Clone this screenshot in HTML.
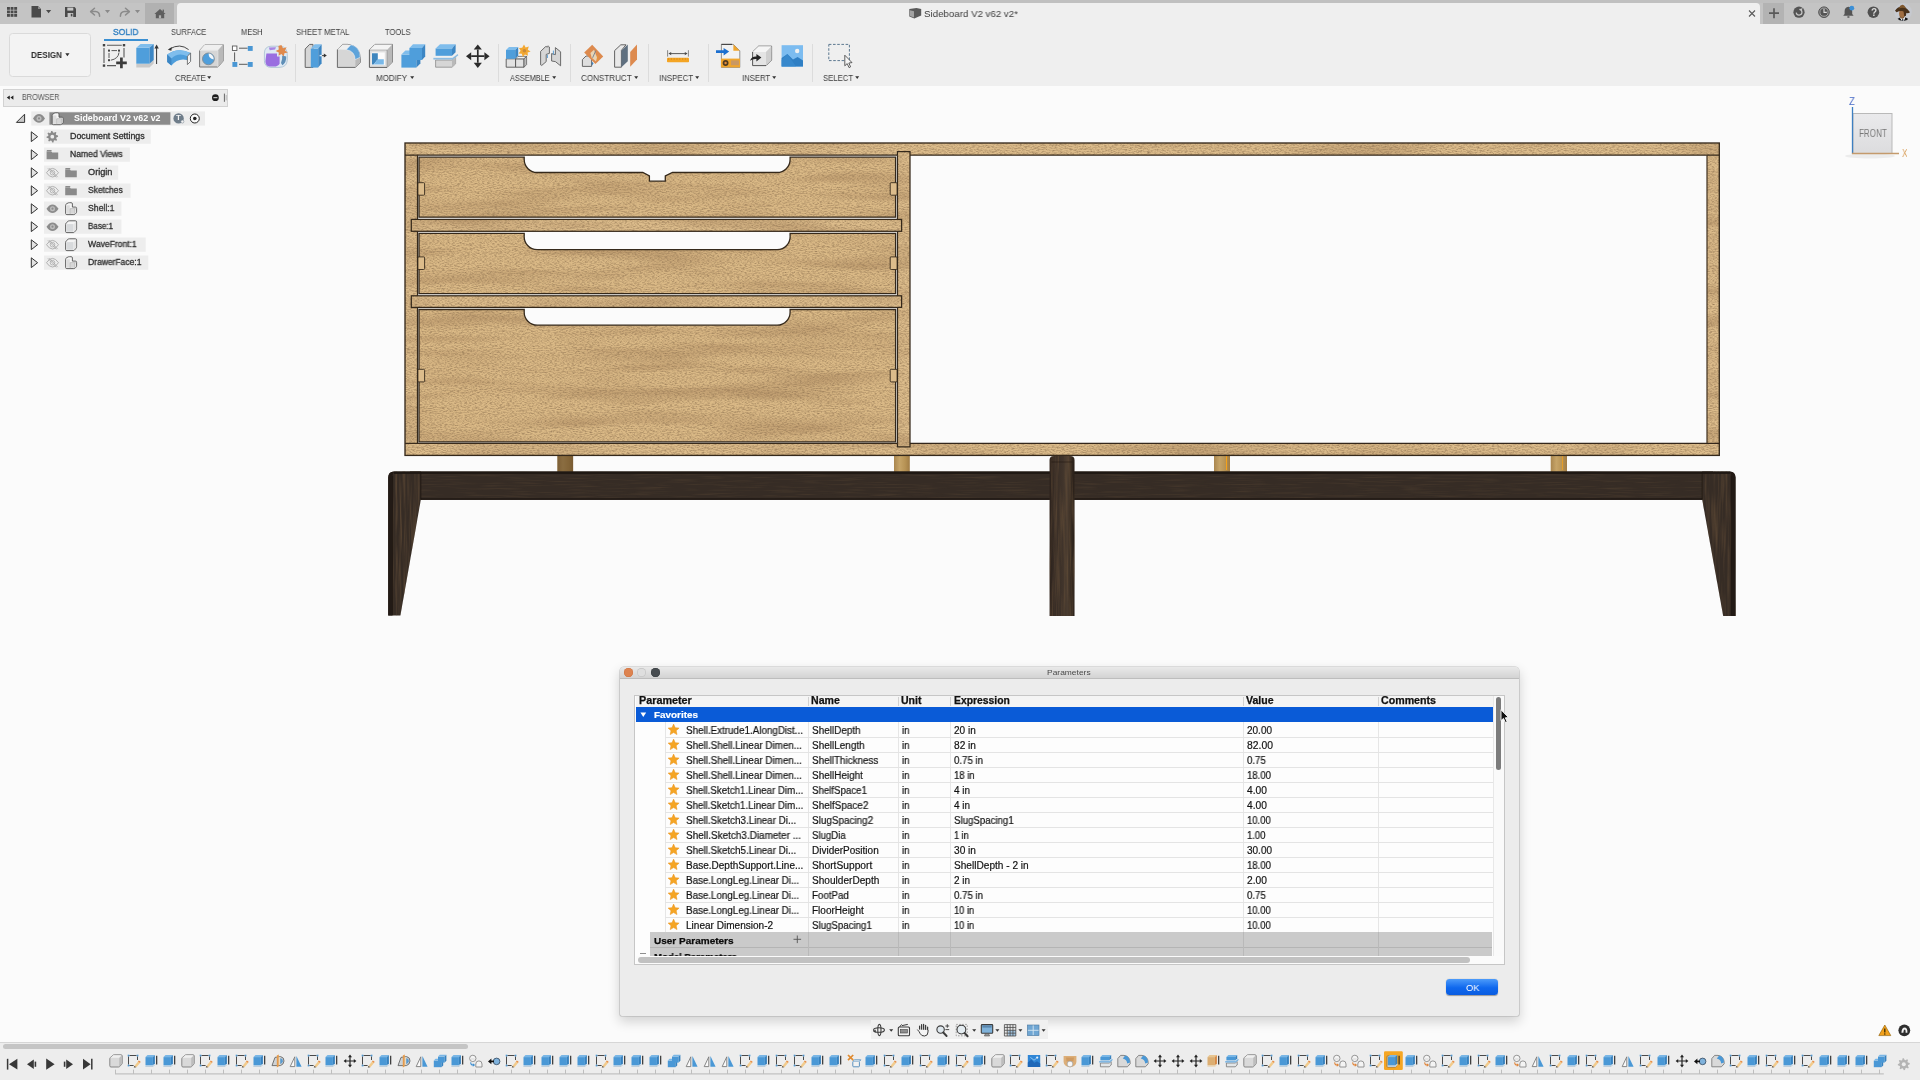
<!DOCTYPE html>
<html><head><meta charset="utf-8"><title>Sideboard V2 v62 v2</title>
<style>
html,body{margin:0;padding:0;}
body{width:1920px;height:1080px;overflow:hidden;background:#fbfbfb;position:relative;font-family:"Liberation Sans",sans-serif;}
.t{position:absolute;white-space:nowrap;font-family:"Liberation Sans",sans-serif;will-change:transform;}
.a{position:absolute;}
svg{position:absolute;overflow:visible;}
</style></head><body>

<div class="a" style="left:0;top:0;width:1920px;height:24px;background:#c4c4c4"></div>
<div class="a" style="left:0;top:0;width:1920px;height:3px;background:#c0c0c0"></div>
<div class="a" style="left:0;top:24px;width:1920px;height:62px;background:#efefef"></div>
<div class="a" style="left:177px;top:3px;width:1583px;height:22px;background:#efefef;border-radius:4px 4px 0 0"></div>
<div class="a" style="left:145px;top:3px;width:29px;height:21px;background:#b1b1b1"></div>
<div class="a" style="left:1763px;top:3px;width:21px;height:21px;background:#b3b3b3"></div>
<div class="a" style="left:0;top:1042px;width:1920px;height:38px;background:#ededed;border-top:1px solid #d6d6d6;box-sizing:border-box"></div>
<div class="a" style="left:3px;top:1044px;width:465px;height:5px;background:#c5c5c5;border-radius:3px"></div>
<svg width="1920" height="1080" viewBox="0 0 1920 1080" style="left:0;top:0">
<defs>
<filter id="grain" x="0" y="0" width="100%" height="100%" color-interpolation-filters="sRGB">
 <feTurbulence type="fractalNoise" baseFrequency="0.4 0.95" numOctaves="3" seed="7" result="n1"/>
 <feColorMatrix in="n1" type="matrix" values="0 0 0 0 0.55  0 0 0 0 0.44  0 0 0 0 0.31  1.4 0 0 0 -0.54" result="g1"/>
 <feTurbulence type="fractalNoise" baseFrequency="0.007 0.07" numOctaves="2" seed="2" result="n2"/>
 <feColorMatrix in="n2" type="matrix" values="0 0 0 0 0.62  0 0 0 0 0.48  0 0 0 0 0.33  1.1 0 0 0 -0.47" result="g2"/>
 <feMerge result="m"><feMergeNode in="g2"/><feMergeNode in="g1"/></feMerge>
 <feComposite in="m" in2="SourceGraphic" operator="in" result="gg"/>
 <feMerge><feMergeNode in="SourceGraphic"/><feMergeNode in="gg"/></feMerge>
</filter>
<filter id="grainL" x="0" y="0" width="100%" height="100%" color-interpolation-filters="sRGB">
 <feTurbulence type="fractalNoise" baseFrequency="0.05 0.6" numOctaves="3" seed="3" result="n"/>
 <feColorMatrix in="n" type="matrix" values="0 0 0 0 0.98  0 0 0 0 0.88  0 0 0 0 0.68  1.6 0 0 0 -0.70" result="g"/>
 <feComposite in="g" in2="SourceGraphic" operator="in" result="gg"/>
 <feMerge><feMergeNode in="SourceGraphic"/><feMergeNode in="gg"/></feMerge>
</filter>
<filter id="grainD" x="0" y="0" width="100%" height="100%" color-interpolation-filters="sRGB">
 <feTurbulence type="fractalNoise" baseFrequency="0.03 0.7" numOctaves="2" seed="11" result="n"/>
 <feColorMatrix in="n" type="matrix" values="0 0 0 0 0.34  0 0 0 0 0.27  0 0 0 0 0.20  1.1 0 0 0 -0.52" result="g"/>
 <feComposite in="g" in2="SourceGraphic" operator="in" result="gg"/>
 <feMerge><feMergeNode in="SourceGraphic"/><feMergeNode in="gg"/></feMerge>
</filter>
<filter id="grainV" x="0" y="0" width="100%" height="100%" color-interpolation-filters="sRGB">
 <feTurbulence type="fractalNoise" baseFrequency="0.5 0.02" numOctaves="2" seed="5" result="n"/>
 <feColorMatrix in="n" type="matrix" values="0 0 0 0 0.40  0 0 0 0 0.31  0 0 0 0 0.22  1.5 0 0 0 -0.60" result="g"/>
 <feComposite in="g" in2="SourceGraphic" operator="in" result="gg"/>
 <feMerge><feMergeNode in="SourceGraphic"/><feMergeNode in="gg"/></feMerge>
</filter>
<linearGradient id="vcg" x1="0" x2="0" y1="0" y2="1"><stop offset="0" stop-color="#eaeaec"/><stop offset="1" stop-color="#dcdcde"/></linearGradient>
<linearGradient id="slug" x1="0" x2="1" y1="0" y2="0">
 <stop offset="0" stop-color="#a9864f"/><stop offset="0.35" stop-color="#c6a468"/><stop offset="0.7" stop-color="#b79355"/><stop offset="1" stop-color="#a07c45"/>
</linearGradient>
<linearGradient id="legc" x1="0" x2="1" y1="0" y2="0">
 <stop offset="0" stop-color="#2b211b"/><stop offset="0.18" stop-color="#372c25"/><stop offset="0.5" stop-color="#3f332a"/><stop offset="0.72" stop-color="#4a3c30"/><stop offset="0.9" stop-color="#33281f"/><stop offset="1" stop-color="#271e18"/>
</linearGradient>
</defs>
<rect x="557.4" y="455" width="15.7" height="17" fill="url(#slug)"/>
<rect x="894.0" y="455" width="15.8" height="17" fill="url(#slug)"/>
<rect x="1214.0" y="455" width="16.0" height="17" fill="url(#slug)"/>
<rect x="1550.7" y="455" width="16.3" height="17" fill="url(#slug)"/>
<rect x="557.4" y="455" width="15.7" height="17" fill="#5a4020" opacity="0.55"/>
<rect x="1226" y="456" width="1" height="14" fill="#f5a21a"/>
<rect x="1562" y="456" width="1" height="14" fill="#f5a21a" opacity="0.75"/>
<g filter="url(#grainD)">
<rect x="410" y="471.5" width="1303" height="28.2" fill="#362c25"/>
</g>
<g filter="url(#grainV)">
<path d="M388.2,477.5 Q388.4,471.7 394,471.5 L420.8,471.5 L420.8,499.7 L400.4,615.6 L388.2,615.6 Z" fill="#362c25"/>
<path d="M1735.5,477.5 Q1735.3,471.7 1729.7,471.5 L1702.2,471.5 L1702.2,499.7 L1723.2,616 L1735.5,616 Z" fill="#362c25"/>
</g>
<rect x="394" y="471.5" width="1336" height="2.4" fill="#1f1813"/>
<rect x="420.8" y="498.2" width="1281.4" height="1.7" fill="#211914"/>
<line x1="420.8" y1="472" x2="420.8" y2="499.7" stroke="#1c140f" stroke-width="0.8"/>
<line x1="1702.2" y1="472" x2="1702.2" y2="499.7" stroke="#1c140f" stroke-width="0.8"/>
<path d="M388.2,477.5 Q388.4,471.7 394,471.5 L392.4,475.6 L392.4,615.6 L388.2,615.6 Z" fill="#221a15"/>
<path d="M1735.5,477.5 Q1735.3,471.7 1729.7,471.5 L1731.4,475.6 L1731.4,616 L1735.5,616 Z" fill="#221a15"/>
<path d="M392.6,475.6 L392.6,615" stroke="#17110d" stroke-width="0.7" fill="none"/>
<path d="M1731.2,475.6 L1731.2,615.5" stroke="#17110d" stroke-width="0.7" fill="none"/>
<g filter="url(#grain)">
<rect x="405" y="143" width="1314.3" height="312.4" fill="#dcbc8b"/>
</g>
<rect x="910" y="155.2" width="797" height="288.1" fill="#fbfbfb"/>
<rect x="417.5" y="155.2" width="480" height="288.1" fill="#fbfbfb"/>
<g filter="url(#grain)">
<rect x="411.3" y="219.4" width="490.3" height="11.9" fill="#dcbc8b"/>
<rect x="411.3" y="295.8" width="490.3" height="11.6" fill="#dcbc8b"/>
<rect x="897.5" y="151.5" width="12.5" height="295.3" fill="#dcbc8b"/>
</g>
<path d="M419.0,157.2 L524.2,157.2 L524.2,159.5 A13.0,13.0 0 0 0 537.2,172.5 L642.8,172.5 L649.4,176.0 L649.4,181.2 L665.3,181.2 L665.3,176.0 L672.5,172.5 L777.1,172.5 A13.0,13.0 0 0 0 790.1,159.5 L790.1,157.2 L895.6,157.2 L895.6,217.2 L419.0,217.2 Z" fill="#dab986" filter="url(#grain)"/>
<path d="M419.0,157.2 L524.2,157.2 L524.2,159.5 A13.0,13.0 0 0 0 537.2,172.5 L642.8,172.5 L649.4,176.0 L649.4,181.2 L665.3,181.2 L665.3,176.0 L672.5,172.5 L777.1,172.5 A13.0,13.0 0 0 0 790.1,159.5 L790.1,157.2 L895.6,157.2 L895.6,217.2 L419.0,217.2 Z" fill="none" stroke="#35291b" stroke-width="1.3"/>
<path d="M419.0,233.3 L524.2,233.3 L524.2,235.60000000000002 A13.0,13.0 0 0 0 537.2,249.6 L777.1,249.6 A13.0,13.0 0 0 0 790.1,235.60000000000002 L790.1,233.3 L895.6,233.3 L895.6,293.7 L419.0,293.7 Z" fill="#dab986" filter="url(#grain)"/>
<path d="M419.0,233.3 L524.2,233.3 L524.2,235.60000000000002 A13.0,13.0 0 0 0 537.2,249.6 L777.1,249.6 A13.0,13.0 0 0 0 790.1,235.60000000000002 L790.1,233.3 L895.6,233.3 L895.6,293.7 L419.0,293.7 Z" fill="none" stroke="#35291b" stroke-width="1.3"/>
<path d="M419.0,309.5 L524.2,309.5 L524.2,311.8 A13.0,13.0 0 0 0 537.2,325.2 L777.1,325.2 A13.0,13.0 0 0 0 790.1,311.8 L790.1,309.5 L895.6,309.5 L895.6,441.8 L419.0,441.8 Z" fill="#dab986" filter="url(#grain)"/>
<path d="M419.0,309.5 L524.2,309.5 L524.2,311.8 A13.0,13.0 0 0 0 537.2,325.2 L777.1,325.2 A13.0,13.0 0 0 0 790.1,311.8 L790.1,309.5 L895.6,309.5 L895.6,441.8 L419.0,441.8 Z" fill="none" stroke="#35291b" stroke-width="1.3"/>
<rect x="417.8" y="182.7" width="6.8" height="12.5" rx="1" fill="#dcbc8b" stroke="#35291b" stroke-width="0.9"/>
<rect x="890.2" y="182.7" width="7.0" height="12.5" rx="1" fill="#dcbc8b" stroke="#35291b" stroke-width="0.9"/>
<rect x="417.8" y="256.9" width="6.8" height="12.6" rx="1" fill="#dcbc8b" stroke="#35291b" stroke-width="0.9"/>
<rect x="890.2" y="256.9" width="7.0" height="12.6" rx="1" fill="#dcbc8b" stroke="#35291b" stroke-width="0.9"/>
<rect x="417.8" y="369.3" width="6.8" height="12.6" rx="1" fill="#dcbc8b" stroke="#35291b" stroke-width="0.9"/>
<rect x="890.2" y="369.3" width="7.0" height="12.6" rx="1" fill="#dcbc8b" stroke="#35291b" stroke-width="0.9"/>
<rect x="405" y="143" width="1314.3" height="312.4" fill="none" stroke="#35291b" stroke-width="1.35"/>
<line x1="405" y1="155.2" x2="897.5" y2="155.2" stroke="#35291b" stroke-width="1.25"/>
<line x1="910" y1="155.2" x2="1719.3" y2="155.2" stroke="#35291b" stroke-width="1.25"/>
<line x1="405" y1="443.3" x2="897.5" y2="443.3" stroke="#3a2c1c" stroke-width="1.2"/>
<line x1="910" y1="443.3" x2="1719.3" y2="443.3" stroke="#33261a" stroke-width="1.3"/>
<line x1="417.5" y1="155.2" x2="417.5" y2="219.4" stroke="#35291b" stroke-width="1.25"/>
<line x1="897.5" y1="155.2" x2="897.5" y2="219.4" stroke="#35291b" stroke-width="1.25"/>
<line x1="417.5" y1="231.3" x2="417.5" y2="295.8" stroke="#35291b" stroke-width="1.25"/>
<line x1="897.5" y1="231.3" x2="897.5" y2="295.8" stroke="#35291b" stroke-width="1.25"/>
<line x1="417.5" y1="307.4" x2="417.5" y2="443.3" stroke="#35291b" stroke-width="1.25"/>
<line x1="897.5" y1="307.4" x2="897.5" y2="443.3" stroke="#35291b" stroke-width="1.25"/>
<line x1="1707" y1="155.2" x2="1707" y2="443.3" stroke="#3f301f" stroke-width="1.2"/>
<path d="M897.5,155.2 L897.5,151.5 L910,151.5 L910,446.8 L897.5,446.8 L897.5,443.3" fill="none" stroke="#35291b" stroke-width="1.25"/>
<rect x="411.3" y="219.4" width="490.3" height="11.9" fill="none" stroke="#35291b" stroke-width="1.25"/>
<rect x="411.3" y="295.8" width="490.3" height="11.6" fill="none" stroke="#35291b" stroke-width="1.25"/>
<path d="M1049.6,460 Q1049.6,456 1054,456 L1070,456 Q1074.5,456 1074.5,460 L1074.5,616 L1049.6,616 Z" fill="url(#legc)" filter="url(#grainV)"/>
<path d="M1051.5,462 L1072.5,462" stroke="#1a120d" stroke-width="0.7" opacity="0.7"/>
<rect x="1853" y="113.5" width="39" height="40" fill="url(#vcg)" stroke="#b9b9b9" stroke-width="1"/>
<ellipse cx="1870" cy="156" rx="25" ry="2.5" fill="#000" opacity="0.06"/>
<line x1="1852.5" y1="107" x2="1852.5" y2="154" stroke="#3d7fc1" stroke-width="1.3"/>
<line x1="1852" y1="153.6" x2="1899" y2="153.6" stroke="#c49a6c" stroke-width="1.5"/>
</svg>
<span class="t" style="left:1858.80px;top:126.52px;font-size:10.4px;line-height:14px;color:#777;transform:scaleX(0.7762);transform-origin:0 50%;">FRONT</span>
<span class="t" style="left:1849.20px;top:94.52px;font-size:10.4px;line-height:14px;color:#4a6cc8;transform:scaleX(0.9130);transform-origin:0 50%;">Z</span>
<span class="t" style="left:1902.10px;top:146.52px;font-size:10.4px;line-height:14px;color:#d9a05c;transform:scaleX(0.7785);transform-origin:0 50%;">X</span>
<div class="a" style="left:3px;top:88.5px;width:225px;height:18.5px;box-sizing:border-box;background:#ebebeb;border:1px solid #d2d2d2"></div>
<span class="t" style="left:21.50px;top:91.71px;font-size:8.4px;line-height:11px;color:#555;transform:scaleX(0.8640);transform-origin:0 50%;">BROWSER</span>
<svg width="1920" height="300" viewBox="0 0 1920 300" style="left:0;top:0">
<path d="M10.4,97.6 L13.4,95.4 L13.4,99.8 Z M6.8,97.6 L9.8,95.4 L9.8,99.8 Z" fill="#222"/>
<circle cx="215.4" cy="97.7" r="3.4" fill="#1e1e1e"/><rect x="213.4" y="97.2" width="4" height="1" fill="#e6e6e6"/>
<path d="M224.4,93.6 L224.4,101.8" stroke="#666" stroke-width="1"/><path d="M226.2,95 L226.2,100.4" stroke="#aaa" stroke-width="0.8"/>
<rect x="31.3" y="111.4" width="173.7" height="14.2" fill="#ececec"/>
<path d="M24.6,114.2 L24.6,122.4 L16.4,122.4 Z" fill="#c9c9c9" stroke="#333" stroke-width="1" stroke-linejoin="round"/>
<path d="M33,118.4 Q35.8,114.10000000000001 39,114.10000000000001 Q42.2,114.10000000000001 45,118.4 Q42.2,122.7 39,122.7 Q35.8,122.7 33,118.4 Z" fill="#8c8c8c"/>
<circle cx="39" cy="118.4" r="2.5" fill="#bdbdbd"/><circle cx="39" cy="118.4" r="1.1" fill="#8c8c8c"/>
<rect x="49.4" y="112.3" width="121" height="12.4" fill="#8b8b8b"/>
<path d="M52.2,115.4 Q52.2,114.4 53.0,114.0 L54.6,113.10000000000001 Q55.2,112.80000000000001 56.0,112.80000000000001 L57.800000000000004,112.80000000000001 Q59.0,112.80000000000001 59.0,114.0 L59.0,117.2 L62.0,117.2 Q63.2,117.2 63.2,118.4 L63.2,122.0 Q63.2,122.80000000000001 62.6,123.30000000000001 L61.6,124.30000000000001 Q61.2,124.7 60.400000000000006,124.7 L53.4,124.7 Q52.2,124.7 52.2,123.5 Z" fill="#f4f4f4" stroke="#555" stroke-width="0.9"/>
<rect x="53.0" y="115.4" width="3.4" height="8.4" fill="#dcdcdc"/>
<rect x="57.4" y="119.4" width="3.6" height="4.4" fill="#d6d6d6"/>
<path d="M56.800000000000004,118.80000000000001 L56.800000000000004,124.4 M56.800000000000004,118.80000000000001 L61.400000000000006,118.80000000000001 L62.8,117.60000000000001 M61.400000000000006,118.80000000000001 L61.400000000000006,124.4" stroke="#9a9a9a" stroke-width="0.6" fill="none"/>
<circle cx="178.6" cy="118.4" r="5.2" fill="#6f7d8a"/>
<circle cx="182.4" cy="121.6" r="1.5" fill="#f3f3f3" stroke="#6f7d8a" stroke-width="0.5"/>
<circle cx="194.8" cy="118.5" r="4.5" fill="#fafafa" stroke="#222" stroke-width="1"/><circle cx="194.8" cy="118.5" r="1.8" fill="#222"/>
<rect x="44" y="129.5" width="106.8" height="14.3" fill="#ededed"/>
<path d="M31.3,131.8 L37.6,136.7 L31.3,141.6 Z" fill="#e3e3e3" stroke="#333" stroke-width="1" stroke-linejoin="round"/>
<path d="M57.99,135.57 L58.10,136.70 L56.42,137.52 L56.18,138.31 L57.12,139.92 L56.40,140.80 L54.63,140.19 L53.91,140.58 L53.43,142.39 L52.30,142.50 L51.48,140.82 L50.69,140.58 L49.08,141.52 L48.20,140.80 L48.81,139.03 L48.42,138.31 L46.61,137.83 L46.50,136.70 L48.18,135.88 L48.42,135.09 L47.48,133.48 L48.20,132.60 L49.97,133.21 L50.69,132.82 L51.17,131.01 L52.30,130.90 L53.12,132.58 L53.91,132.82 L55.52,131.88 L56.40,132.60 L55.79,134.37 L56.18,135.09 Z" fill="#8a8a8a"/>
<circle cx="52.3" cy="136.7" r="1.9" fill="#ececec"/>
<rect x="44" y="147.5" width="85.9" height="14.3" fill="#ededed"/>
<path d="M31.3,149.8 L37.6,154.7 L31.3,159.6 Z" fill="#e3e3e3" stroke="#333" stroke-width="1" stroke-linejoin="round"/>
<path d="M46.6,151.29999999999998 L46.6,159.29999999999998 L58.2,159.29999999999998 L58.2,152.5 L52.2,152.5 L51.2,151.29999999999998 Z" fill="#8a8a8a"/>
<path d="M46.800000000000004,150.1 L51.2,150.1 L52.0,151.1 L46.800000000000004,151.1 Z" fill="#8a8a8a"/>
<rect x="44" y="165.5" width="74.2" height="14.3" fill="#ededed"/>
<path d="M31.3,167.8 L37.6,172.7 L31.3,177.6 Z" fill="#e3e3e3" stroke="#333" stroke-width="1" stroke-linejoin="round"/>
<path d="M46.5,172.7 Q49.3,168.39999999999998 52.5,168.39999999999998 Q55.7,168.39999999999998 58.5,172.7 Q55.7,177.0 52.5,177.0 Q49.3,177.0 46.5,172.7 Z" fill="none" stroke="#a9a9a9" stroke-width="0.9"/>
<circle cx="52.5" cy="172.7" r="2.3" fill="none" stroke="#a9a9a9" stroke-width="0.8"/>
<path d="M47.9,168.29999999999998 L56.3,177.29999999999998 M49.3,168.1 L57.7,177.1" stroke="#a9a9a9" stroke-width="0.75"/>
<path d="M65.2,169.29999999999998 L65.2,177.29999999999998 L76.8,177.29999999999998 L76.8,170.5 L70.8,170.5 L69.8,169.29999999999998 Z" fill="#8a8a8a"/>
<path d="M65.4,168.1 L69.8,168.1 L70.60000000000001,169.1 L65.4,169.1 Z" fill="#8a8a8a"/>
<rect x="44" y="183.5" width="86.6" height="14.3" fill="#ededed"/>
<path d="M31.3,185.8 L37.6,190.7 L31.3,195.6 Z" fill="#e3e3e3" stroke="#333" stroke-width="1" stroke-linejoin="round"/>
<path d="M46.5,190.7 Q49.3,186.39999999999998 52.5,186.39999999999998 Q55.7,186.39999999999998 58.5,190.7 Q55.7,195.0 52.5,195.0 Q49.3,195.0 46.5,190.7 Z" fill="none" stroke="#a9a9a9" stroke-width="0.9"/>
<circle cx="52.5" cy="190.7" r="2.3" fill="none" stroke="#a9a9a9" stroke-width="0.8"/>
<path d="M47.9,186.29999999999998 L56.3,195.29999999999998 M49.3,186.1 L57.7,195.1" stroke="#a9a9a9" stroke-width="0.75"/>
<path d="M65.2,187.29999999999998 L65.2,195.29999999999998 L76.8,195.29999999999998 L76.8,188.5 L70.8,188.5 L69.8,187.29999999999998 Z" fill="#8a8a8a"/>
<path d="M65.4,186.1 L69.8,186.1 L70.60000000000001,187.1 L65.4,187.1 Z" fill="#8a8a8a"/>
<rect x="44" y="201.5" width="77.4" height="14.3" fill="#ededed"/>
<path d="M31.3,203.8 L37.6,208.7 L31.3,213.6 Z" fill="#e3e3e3" stroke="#333" stroke-width="1" stroke-linejoin="round"/>
<path d="M46.5,208.7 Q49.3,204.39999999999998 52.5,204.39999999999998 Q55.7,204.39999999999998 58.5,208.7 Q55.7,213.0 52.5,213.0 Q49.3,213.0 46.5,208.7 Z" fill="#8c8c8c"/>
<circle cx="52.5" cy="208.7" r="2.5" fill="#bdbdbd"/><circle cx="52.5" cy="208.7" r="1.1" fill="#8c8c8c"/>
<path d="M65.6,205.29999999999998 Q65.6,204.29999999999998 66.4,203.89999999999998 L68.0,202.99999999999997 Q68.6,202.7 69.4,202.7 L71.2,202.7 Q72.4,202.7 72.4,203.89999999999998 L72.4,207.1 L75.4,207.1 Q76.6,207.1 76.6,208.29999999999998 L76.6,211.89999999999998 Q76.6,212.7 76.0,213.2 L75.0,214.2 Q74.6,214.6 73.8,214.6 L66.8,214.6 Q65.6,214.6 65.6,213.39999999999998 Z" fill="#f4f4f4" stroke="#555" stroke-width="0.9"/>
<rect x="66.4" y="205.29999999999998" width="3.4" height="8.4" fill="#dcdcdc"/>
<rect x="70.8" y="209.29999999999998" width="3.6" height="4.4" fill="#d6d6d6"/>
<path d="M70.2,208.7 L70.2,214.29999999999998 M70.2,208.7 L74.8,208.7 L76.2,207.49999999999997 M74.8,208.7 L74.8,214.29999999999998" stroke="#9a9a9a" stroke-width="0.6" fill="none"/>
<rect x="44" y="219.5" width="77.4" height="14.3" fill="#ededed"/>
<path d="M31.3,221.8 L37.6,226.7 L31.3,231.6 Z" fill="#e3e3e3" stroke="#333" stroke-width="1" stroke-linejoin="round"/>
<path d="M46.5,226.7 Q49.3,222.39999999999998 52.5,222.39999999999998 Q55.7,222.39999999999998 58.5,226.7 Q55.7,231.0 52.5,231.0 Q49.3,231.0 46.5,226.7 Z" fill="#8c8c8c"/>
<circle cx="52.5" cy="226.7" r="2.5" fill="#bdbdbd"/><circle cx="52.5" cy="226.7" r="1.1" fill="#8c8c8c"/>
<path d="M65.6,224.29999999999998 Q65.6,223.49999999999997 66.2,222.99999999999997 L68.0,221.29999999999998 Q68.6,220.79999999999998 69.4,220.79999999999998 L75.4,220.79999999999998 Q76.6,220.79999999999998 76.6,221.99999999999997 L76.6,228.89999999999998 Q76.6,229.7 76.0,230.29999999999998 L74.4,232.1 Q74.0,232.6 73.2,232.6 L66.8,232.6 Q65.6,232.6 65.6,231.39999999999998 Z" fill="#f4f4f4" stroke="#555" stroke-width="0.9"/>
<rect x="66.5" y="224.1" width="7" height="7.6" fill="#d8dadc"/>
<path d="M74.0,223.7 L76.2,221.49999999999997 L76.2,229.1 L74.0,231.7 Z" fill="#e4e4e4"/>
<rect x="44" y="237.5" width="101.7" height="14.3" fill="#ededed"/>
<path d="M31.3,239.8 L37.6,244.7 L31.3,249.6 Z" fill="#e3e3e3" stroke="#333" stroke-width="1" stroke-linejoin="round"/>
<path d="M46.5,244.7 Q49.3,240.39999999999998 52.5,240.39999999999998 Q55.7,240.39999999999998 58.5,244.7 Q55.7,249.0 52.5,249.0 Q49.3,249.0 46.5,244.7 Z" fill="none" stroke="#a9a9a9" stroke-width="0.9"/>
<circle cx="52.5" cy="244.7" r="2.3" fill="none" stroke="#a9a9a9" stroke-width="0.8"/>
<path d="M47.9,240.29999999999998 L56.3,249.29999999999998 M49.3,240.1 L57.7,249.1" stroke="#a9a9a9" stroke-width="0.75"/>
<path d="M65.6,242.29999999999998 Q65.6,241.49999999999997 66.2,240.99999999999997 L68.0,239.29999999999998 Q68.6,238.79999999999998 69.4,238.79999999999998 L75.4,238.79999999999998 Q76.6,238.79999999999998 76.6,239.99999999999997 L76.6,246.89999999999998 Q76.6,247.7 76.0,248.29999999999998 L74.4,250.1 Q74.0,250.6 73.2,250.6 L66.8,250.6 Q65.6,250.6 65.6,249.39999999999998 Z" fill="#f4f4f4" stroke="#555" stroke-width="0.9"/>
<rect x="66.5" y="242.1" width="7" height="7.6" fill="#d8dadc"/>
<path d="M74.0,241.7 L76.2,239.49999999999997 L76.2,247.1 L74.0,249.7 Z" fill="#e4e4e4"/>
<rect x="44" y="255.5" width="104.3" height="14.3" fill="#ededed"/>
<path d="M31.3,257.8 L37.6,262.7 L31.3,267.6 Z" fill="#e3e3e3" stroke="#333" stroke-width="1" stroke-linejoin="round"/>
<path d="M46.5,262.7 Q49.3,258.4 52.5,258.4 Q55.7,258.4 58.5,262.7 Q55.7,267.0 52.5,267.0 Q49.3,267.0 46.5,262.7 Z" fill="none" stroke="#a9a9a9" stroke-width="0.9"/>
<circle cx="52.5" cy="262.7" r="2.3" fill="none" stroke="#a9a9a9" stroke-width="0.8"/>
<path d="M47.9,258.3 L56.3,267.3 M49.3,258.09999999999997 L57.7,267.09999999999997" stroke="#a9a9a9" stroke-width="0.75"/>
<path d="M65.6,259.3 Q65.6,258.3 66.4,257.90000000000003 L68.0,257.0 Q68.6,256.7 69.4,256.7 L71.2,256.7 Q72.4,256.7 72.4,257.90000000000003 L72.4,261.1 L75.4,261.1 Q76.6,261.1 76.6,262.3 L76.6,265.90000000000003 Q76.6,266.7 76.0,267.2 L75.0,268.2 Q74.6,268.6 73.8,268.6 L66.8,268.6 Q65.6,268.6 65.6,267.40000000000003 Z" fill="#f4f4f4" stroke="#555" stroke-width="0.9"/>
<rect x="66.4" y="259.3" width="3.4" height="8.4" fill="#dcdcdc"/>
<rect x="70.8" y="263.3" width="3.6" height="4.4" fill="#d6d6d6"/>
<path d="M70.2,262.7 L70.2,268.3 M70.2,262.7 L74.8,262.7 L76.2,261.5 M74.8,262.7 L74.8,268.3" stroke="#9a9a9a" stroke-width="0.6" fill="none"/>
</svg>
<span class="t" style="left:74.30px;top:112.61px;font-size:8.7px;line-height:11px;color:#fff;font-weight:bold;transform:scaleX(1.0245);transform-origin:0 50%;">Sideboard V2 v62 v2</span>
<span class="t" style="left:176.20px;top:113.35px;font-size:8px;line-height:10px;color:#f4f4f4;font-weight:bold;transform:scaleX(1.0001);transform-origin:0 50%;">T</span>
<span class="t" style="left:69.50px;top:130.61px;font-size:8.7px;line-height:11px;color:#2e2e2e;transform:scaleX(1.0176);transform-origin:0 50%;-webkit-text-stroke:0.3px #2e2e2e;">Document Settings</span>
<span class="t" style="left:69.50px;top:148.61px;font-size:8.7px;line-height:11px;color:#2e2e2e;transform:scaleX(0.9867);transform-origin:0 50%;-webkit-text-stroke:0.3px #2e2e2e;">Named Views</span>
<span class="t" style="left:87.60px;top:166.61px;font-size:8.7px;line-height:11px;color:#2e2e2e;transform:scaleX(1.0557);transform-origin:0 50%;-webkit-text-stroke:0.3px #2e2e2e;">Origin</span>
<span class="t" style="left:87.60px;top:184.61px;font-size:8.7px;line-height:11px;color:#2e2e2e;transform:scaleX(0.9697);transform-origin:0 50%;-webkit-text-stroke:0.3px #2e2e2e;">Sketches</span>
<span class="t" style="left:87.60px;top:202.61px;font-size:8.7px;line-height:11px;color:#2e2e2e;transform:scaleX(0.9924);transform-origin:0 50%;-webkit-text-stroke:0.3px #2e2e2e;">Shell:1</span>
<span class="t" style="left:87.60px;top:220.61px;font-size:8.7px;line-height:11px;color:#2e2e2e;transform:scaleX(0.9230);transform-origin:0 50%;-webkit-text-stroke:0.3px #2e2e2e;">Base:1</span>
<span class="t" style="left:87.60px;top:238.61px;font-size:8.7px;line-height:11px;color:#2e2e2e;transform:scaleX(0.9863);transform-origin:0 50%;-webkit-text-stroke:0.3px #2e2e2e;">WaveFront:1</span>
<span class="t" style="left:87.60px;top:256.61px;font-size:8.7px;line-height:11px;color:#2e2e2e;transform:scaleX(0.9792);transform-origin:0 50%;-webkit-text-stroke:0.3px #2e2e2e;">DrawerFace:1</span>
<div class="a" style="left:620px;top:666.8px;width:899.2px;height:349px;background:#ececec;border-radius:4px 4px 2px 2px;box-shadow:0 5px 12px 1px rgba(0,0,0,0.16),0 0 0 0.6px rgba(0,0,0,0.20)"></div>
<div class="a" style="left:620px;top:666.8px;width:899.2px;height:11.8px;border-radius:4px 4px 0 0;background:linear-gradient(#e9e9e9,#d3d3d3);border-bottom:1px solid #bdbdbd;box-sizing:border-box"></div>
<span class="t" style="left:1047.30px;top:668.38px;font-size:7.9px;line-height:10px;color:#4a4a4a;transform:scaleX(1.0703);transform-origin:0 50%;">Parameters</span>
<div class="a" style="left:623.9px;top:668.1px;width:8.8px;height:8.8px;border-radius:50%;background:#dd8350;box-shadow:inset 0 0 0 0.6px #cf7443"></div>
<div class="a" style="left:637px;top:668.1px;width:8.8px;height:8.8px;border-radius:50%;background:#dedede;box-shadow:inset 0 0 0 0.7px #c4c4c4"></div>
<div class="a" style="left:650.9px;top:668.1px;width:8.8px;height:8.8px;border-radius:50%;background:#474c50;box-shadow:inset 0 0 0 0.6px #3a3f43"></div>
<div class="a" style="left:634.2px;top:694.6px;width:870.4px;height:270.6px;box-sizing:border-box;background:#fdfdfd;border:1px solid #c6c6c6"></div>
<div class="a" style="left:635.5px;top:696px;width:857px;height:10.6px;background:#f4f4f4"></div>
<span class="t" style="left:638.70px;top:694.15px;font-size:10px;line-height:13px;color:#111;font-weight:bold;transform:scaleX(1.0793);transform-origin:0 50%;-webkit-text-stroke:0.25px #111;">Parameter</span>
<span class="t" style="left:811.20px;top:694.15px;font-size:10px;line-height:13px;color:#111;font-weight:bold;transform:scaleX(1.0574);transform-origin:0 50%;-webkit-text-stroke:0.25px #111;">Name</span>
<span class="t" style="left:901.00px;top:694.15px;font-size:10px;line-height:13px;color:#111;font-weight:bold;transform:scaleX(1.0546);transform-origin:0 50%;-webkit-text-stroke:0.25px #111;">Unit</span>
<span class="t" style="left:953.80px;top:694.15px;font-size:10px;line-height:13px;color:#111;font-weight:bold;transform:scaleX(1.0350);transform-origin:0 50%;-webkit-text-stroke:0.25px #111;">Expression</span>
<span class="t" style="left:1246.30px;top:694.15px;font-size:10px;line-height:13px;color:#111;font-weight:bold;transform:scaleX(1.0525);transform-origin:0 50%;-webkit-text-stroke:0.25px #111;">Value</span>
<span class="t" style="left:1381.30px;top:694.15px;font-size:10px;line-height:13px;color:#111;font-weight:bold;transform:scaleX(1.0643);transform-origin:0 50%;-webkit-text-stroke:0.25px #111;">Comments</span>
<div class="a" style="left:807.5px;top:697px;width:1px;height:9px;background:#d0d0d0"></div>
<div class="a" style="left:807.5px;top:722px;width:1px;height:210px;background:#e6e6e6"></div>
<div class="a" style="left:897.5px;top:697px;width:1px;height:9px;background:#d0d0d0"></div>
<div class="a" style="left:897.5px;top:722px;width:1px;height:210px;background:#e6e6e6"></div>
<div class="a" style="left:949.7px;top:697px;width:1px;height:9px;background:#d0d0d0"></div>
<div class="a" style="left:949.7px;top:722px;width:1px;height:210px;background:#e6e6e6"></div>
<div class="a" style="left:1243px;top:697px;width:1px;height:9px;background:#d0d0d0"></div>
<div class="a" style="left:1243px;top:722px;width:1px;height:210px;background:#e6e6e6"></div>
<div class="a" style="left:1378px;top:697px;width:1px;height:9px;background:#d0d0d0"></div>
<div class="a" style="left:1378px;top:722px;width:1px;height:210px;background:#e6e6e6"></div>
<div class="a" style="left:665px;top:722px;width:1px;height:210px;background:#e6e6e6"></div>
<div class="a" style="left:635.5px;top:707px;width:857px;height:15px;background:#0a5bd7"></div>
<svg width="8" height="6" viewBox="0 0 8 6" style="left:640.4px;top:712.2px"><path d="M0.4,0.4 L6.2,0.4 L3.3,5 Z" fill="#fff"/></svg>
<span class="t" style="left:654.30px;top:708.79px;font-size:9.6px;line-height:12px;color:#fff;font-weight:bold;transform:scaleX(1.0308);transform-origin:0 50%;-webkit-text-stroke:0.2px #fff;">Favorites</span>
<span class="t" style="left:685.50px;top:724.15px;font-size:10px;line-height:13px;color:#111;transform:scaleX(0.9836);transform-origin:0 50%;-webkit-text-stroke:0.18px #111;">Shell.Extrude1.AlongDist...</span>
<span class="t" style="left:811.70px;top:724.15px;font-size:10px;line-height:13px;color:#111;transform:scaleX(0.9934);transform-origin:0 50%;-webkit-text-stroke:0.18px #111;">ShellDepth</span>
<span class="t" style="left:901.80px;top:724.15px;font-size:10px;line-height:13px;color:#111;transform:scaleX(0.9508);transform-origin:0 50%;-webkit-text-stroke:0.18px #111;">in</span>
<span class="t" style="left:954.30px;top:724.15px;font-size:10px;line-height:13px;color:#111;transform:scaleX(1.0007);transform-origin:0 50%;-webkit-text-stroke:0.18px #111;">20 in</span>
<span class="t" style="left:1246.60px;top:724.15px;font-size:10px;line-height:13px;color:#111;transform:scaleX(0.9950);transform-origin:0 50%;-webkit-text-stroke:0.18px #111;">20.00</span>
<div class="a" style="left:665px;top:737px;width:827.5px;height:1px;background:#e4e4e4"></div>
<span class="t" style="left:685.50px;top:739.15px;font-size:10px;line-height:13px;color:#111;transform:scaleX(0.9844);transform-origin:0 50%;-webkit-text-stroke:0.18px #111;">Shell.Shell.Linear Dimen...</span>
<span class="t" style="left:811.70px;top:739.15px;font-size:10px;line-height:13px;color:#111;transform:scaleX(0.9958);transform-origin:0 50%;-webkit-text-stroke:0.18px #111;">ShellLength</span>
<span class="t" style="left:901.80px;top:739.15px;font-size:10px;line-height:13px;color:#111;transform:scaleX(0.9508);transform-origin:0 50%;-webkit-text-stroke:0.18px #111;">in</span>
<span class="t" style="left:954.30px;top:739.15px;font-size:10px;line-height:13px;color:#111;transform:scaleX(1.0145);transform-origin:0 50%;-webkit-text-stroke:0.18px #111;">82 in</span>
<span class="t" style="left:1246.60px;top:739.15px;font-size:10px;line-height:13px;color:#111;transform:scaleX(1.0350);transform-origin:0 50%;-webkit-text-stroke:0.18px #111;">82.00</span>
<div class="a" style="left:665px;top:752px;width:827.5px;height:1px;background:#e4e4e4"></div>
<span class="t" style="left:685.50px;top:754.15px;font-size:10px;line-height:13px;color:#111;transform:scaleX(0.9844);transform-origin:0 50%;-webkit-text-stroke:0.18px #111;">Shell.Shell.Linear Dimen...</span>
<span class="t" style="left:811.70px;top:754.15px;font-size:10px;line-height:13px;color:#111;transform:scaleX(0.9859);transform-origin:0 50%;-webkit-text-stroke:0.18px #111;">ShellThickness</span>
<span class="t" style="left:901.80px;top:754.15px;font-size:10px;line-height:13px;color:#111;transform:scaleX(0.9508);transform-origin:0 50%;-webkit-text-stroke:0.18px #111;">in</span>
<span class="t" style="left:954.30px;top:754.15px;font-size:10px;line-height:13px;color:#111;transform:scaleX(0.9659);transform-origin:0 50%;-webkit-text-stroke:0.18px #111;">0.75 in</span>
<span class="t" style="left:1246.60px;top:754.15px;font-size:10px;line-height:13px;color:#111;transform:scaleX(0.9608);transform-origin:0 50%;-webkit-text-stroke:0.18px #111;">0.75</span>
<div class="a" style="left:665px;top:767px;width:827.5px;height:1px;background:#e4e4e4"></div>
<span class="t" style="left:685.50px;top:769.15px;font-size:10px;line-height:13px;color:#111;transform:scaleX(0.9844);transform-origin:0 50%;-webkit-text-stroke:0.18px #111;">Shell.Shell.Linear Dimen...</span>
<span class="t" style="left:811.70px;top:769.15px;font-size:10px;line-height:13px;color:#111;transform:scaleX(0.9952);transform-origin:0 50%;-webkit-text-stroke:0.18px #111;">ShellHeight</span>
<span class="t" style="left:901.80px;top:769.15px;font-size:10px;line-height:13px;color:#111;transform:scaleX(0.9508);transform-origin:0 50%;-webkit-text-stroke:0.18px #111;">in</span>
<span class="t" style="left:954.30px;top:769.15px;font-size:10px;line-height:13px;color:#111;transform:scaleX(0.9546);transform-origin:0 50%;-webkit-text-stroke:0.18px #111;">18 in</span>
<span class="t" style="left:1246.60px;top:769.15px;font-size:10px;line-height:13px;color:#111;transform:scaleX(0.9551);transform-origin:0 50%;-webkit-text-stroke:0.18px #111;">18.00</span>
<div class="a" style="left:665px;top:782px;width:827.5px;height:1px;background:#e4e4e4"></div>
<span class="t" style="left:685.50px;top:784.15px;font-size:10px;line-height:13px;color:#111;transform:scaleX(0.9725);transform-origin:0 50%;-webkit-text-stroke:0.18px #111;">Shell.Sketch1.Linear Dim...</span>
<span class="t" style="left:811.70px;top:784.15px;font-size:10px;line-height:13px;color:#111;transform:scaleX(0.9681);transform-origin:0 50%;-webkit-text-stroke:0.18px #111;">ShelfSpace1</span>
<span class="t" style="left:901.80px;top:784.15px;font-size:10px;line-height:13px;color:#111;transform:scaleX(0.9508);transform-origin:0 50%;-webkit-text-stroke:0.18px #111;">in</span>
<span class="t" style="left:954.30px;top:784.15px;font-size:10px;line-height:13px;color:#111;transform:scaleX(0.9924);transform-origin:0 50%;-webkit-text-stroke:0.18px #111;">4 in</span>
<span class="t" style="left:1246.60px;top:784.15px;font-size:10px;line-height:13px;color:#111;transform:scaleX(1.0225);transform-origin:0 50%;-webkit-text-stroke:0.18px #111;">4.00</span>
<div class="a" style="left:665px;top:797px;width:827.5px;height:1px;background:#e4e4e4"></div>
<span class="t" style="left:685.50px;top:799.15px;font-size:10px;line-height:13px;color:#111;transform:scaleX(0.9725);transform-origin:0 50%;-webkit-text-stroke:0.18px #111;">Shell.Sketch1.Linear Dim...</span>
<span class="t" style="left:811.70px;top:799.15px;font-size:10px;line-height:13px;color:#111;transform:scaleX(0.9928);transform-origin:0 50%;-webkit-text-stroke:0.18px #111;">ShelfSpace2</span>
<span class="t" style="left:901.80px;top:799.15px;font-size:10px;line-height:13px;color:#111;transform:scaleX(0.9508);transform-origin:0 50%;-webkit-text-stroke:0.18px #111;">in</span>
<span class="t" style="left:954.30px;top:799.15px;font-size:10px;line-height:13px;color:#111;transform:scaleX(0.9924);transform-origin:0 50%;-webkit-text-stroke:0.18px #111;">4 in</span>
<span class="t" style="left:1246.60px;top:799.15px;font-size:10px;line-height:13px;color:#111;transform:scaleX(1.0225);transform-origin:0 50%;-webkit-text-stroke:0.18px #111;">4.00</span>
<div class="a" style="left:665px;top:812px;width:827.5px;height:1px;background:#e4e4e4"></div>
<span class="t" style="left:685.50px;top:814.15px;font-size:10px;line-height:13px;color:#111;transform:scaleX(0.9806);transform-origin:0 50%;-webkit-text-stroke:0.18px #111;">Shell.Sketch3.Linear Di...</span>
<span class="t" style="left:811.70px;top:814.15px;font-size:10px;line-height:13px;color:#111;transform:scaleX(0.9900);transform-origin:0 50%;-webkit-text-stroke:0.18px #111;">SlugSpacing2</span>
<span class="t" style="left:901.80px;top:814.15px;font-size:10px;line-height:13px;color:#111;transform:scaleX(0.9508);transform-origin:0 50%;-webkit-text-stroke:0.18px #111;">in</span>
<span class="t" style="left:954.30px;top:814.15px;font-size:10px;line-height:13px;color:#111;transform:scaleX(0.9674);transform-origin:0 50%;-webkit-text-stroke:0.18px #111;">SlugSpacing1</span>
<span class="t" style="left:1246.60px;top:814.15px;font-size:10px;line-height:13px;color:#111;transform:scaleX(0.9471);transform-origin:0 50%;-webkit-text-stroke:0.18px #111;">10.00</span>
<div class="a" style="left:665px;top:827px;width:827.5px;height:1px;background:#e4e4e4"></div>
<span class="t" style="left:685.50px;top:829.15px;font-size:10px;line-height:13px;color:#111;transform:scaleX(0.9948);transform-origin:0 50%;-webkit-text-stroke:0.18px #111;">Shell.Sketch3.Diameter ...</span>
<span class="t" style="left:811.70px;top:829.15px;font-size:10px;line-height:13px;color:#111;transform:scaleX(0.9595);transform-origin:0 50%;-webkit-text-stroke:0.18px #111;">SlugDia</span>
<span class="t" style="left:901.80px;top:829.15px;font-size:10px;line-height:13px;color:#111;transform:scaleX(0.9508);transform-origin:0 50%;-webkit-text-stroke:0.18px #111;">in</span>
<span class="t" style="left:954.30px;top:829.15px;font-size:10px;line-height:13px;color:#111;transform:scaleX(0.9117);transform-origin:0 50%;-webkit-text-stroke:0.18px #111;">1 in</span>
<span class="t" style="left:1246.60px;top:829.15px;font-size:10px;line-height:13px;color:#111;transform:scaleX(0.9454);transform-origin:0 50%;-webkit-text-stroke:0.18px #111;">1.00</span>
<div class="a" style="left:665px;top:842px;width:827.5px;height:1px;background:#e4e4e4"></div>
<span class="t" style="left:685.50px;top:844.15px;font-size:10px;line-height:13px;color:#111;transform:scaleX(0.9806);transform-origin:0 50%;-webkit-text-stroke:0.18px #111;">Shell.Sketch5.Linear Di...</span>
<span class="t" style="left:811.70px;top:844.15px;font-size:10px;line-height:13px;color:#111;transform:scaleX(1.0001);transform-origin:0 50%;-webkit-text-stroke:0.18px #111;">DividerPosition</span>
<span class="t" style="left:901.80px;top:844.15px;font-size:10px;line-height:13px;color:#111;transform:scaleX(0.9508);transform-origin:0 50%;-webkit-text-stroke:0.18px #111;">in</span>
<span class="t" style="left:954.30px;top:844.15px;font-size:10px;line-height:13px;color:#111;transform:scaleX(1.0145);transform-origin:0 50%;-webkit-text-stroke:0.18px #111;">30 in</span>
<span class="t" style="left:1246.60px;top:844.15px;font-size:10px;line-height:13px;color:#111;transform:scaleX(0.9950);transform-origin:0 50%;-webkit-text-stroke:0.18px #111;">30.00</span>
<div class="a" style="left:665px;top:857px;width:827.5px;height:1px;background:#e4e4e4"></div>
<span class="t" style="left:685.50px;top:859.15px;font-size:10px;line-height:13px;color:#111;transform:scaleX(1.0000);transform-origin:0 50%;-webkit-text-stroke:0.18px #111;">Base.DepthSupport.Line...</span>
<span class="t" style="left:811.70px;top:859.15px;font-size:10px;line-height:13px;color:#111;transform:scaleX(1.0233);transform-origin:0 50%;-webkit-text-stroke:0.18px #111;">ShortSupport</span>
<span class="t" style="left:901.80px;top:859.15px;font-size:10px;line-height:13px;color:#111;transform:scaleX(0.9508);transform-origin:0 50%;-webkit-text-stroke:0.18px #111;">in</span>
<span class="t" style="left:954.30px;top:859.15px;font-size:10px;line-height:13px;color:#111;transform:scaleX(1.0104);transform-origin:0 50%;-webkit-text-stroke:0.18px #111;">ShellDepth - 2 in</span>
<span class="t" style="left:1246.60px;top:859.15px;font-size:10px;line-height:13px;color:#111;transform:scaleX(0.9551);transform-origin:0 50%;-webkit-text-stroke:0.18px #111;">18.00</span>
<div class="a" style="left:665px;top:872px;width:827.5px;height:1px;background:#e4e4e4"></div>
<span class="t" style="left:685.50px;top:874.15px;font-size:10px;line-height:13px;color:#111;transform:scaleX(0.9781);transform-origin:0 50%;-webkit-text-stroke:0.18px #111;">Base.LongLeg.Linear Di...</span>
<span class="t" style="left:811.70px;top:874.15px;font-size:10px;line-height:13px;color:#111;transform:scaleX(1.0088);transform-origin:0 50%;-webkit-text-stroke:0.18px #111;">ShoulderDepth</span>
<span class="t" style="left:901.80px;top:874.15px;font-size:10px;line-height:13px;color:#111;transform:scaleX(0.9508);transform-origin:0 50%;-webkit-text-stroke:0.18px #111;">in</span>
<span class="t" style="left:954.30px;top:874.15px;font-size:10px;line-height:13px;color:#111;transform:scaleX(0.9924);transform-origin:0 50%;-webkit-text-stroke:0.18px #111;">2 in</span>
<span class="t" style="left:1246.60px;top:874.15px;font-size:10px;line-height:13px;color:#111;transform:scaleX(1.0225);transform-origin:0 50%;-webkit-text-stroke:0.18px #111;">2.00</span>
<div class="a" style="left:665px;top:887px;width:827.5px;height:1px;background:#e4e4e4"></div>
<span class="t" style="left:685.50px;top:889.15px;font-size:10px;line-height:13px;color:#111;transform:scaleX(0.9781);transform-origin:0 50%;-webkit-text-stroke:0.18px #111;">Base.LongLeg.Linear Di...</span>
<span class="t" style="left:811.70px;top:889.15px;font-size:10px;line-height:13px;color:#111;transform:scaleX(0.9735);transform-origin:0 50%;-webkit-text-stroke:0.18px #111;">FootPad</span>
<span class="t" style="left:901.80px;top:889.15px;font-size:10px;line-height:13px;color:#111;transform:scaleX(0.9508);transform-origin:0 50%;-webkit-text-stroke:0.18px #111;">in</span>
<span class="t" style="left:954.30px;top:889.15px;font-size:10px;line-height:13px;color:#111;transform:scaleX(0.9659);transform-origin:0 50%;-webkit-text-stroke:0.18px #111;">0.75 in</span>
<span class="t" style="left:1246.60px;top:889.15px;font-size:10px;line-height:13px;color:#111;transform:scaleX(0.9608);transform-origin:0 50%;-webkit-text-stroke:0.18px #111;">0.75</span>
<div class="a" style="left:665px;top:902px;width:827.5px;height:1px;background:#e4e4e4"></div>
<span class="t" style="left:685.50px;top:904.15px;font-size:10px;line-height:13px;color:#111;transform:scaleX(0.9781);transform-origin:0 50%;-webkit-text-stroke:0.18px #111;">Base.LongLeg.Linear Di...</span>
<span class="t" style="left:811.70px;top:904.15px;font-size:10px;line-height:13px;color:#111;transform:scaleX(1.0021);transform-origin:0 50%;-webkit-text-stroke:0.18px #111;">FloorHeight</span>
<span class="t" style="left:901.80px;top:904.15px;font-size:10px;line-height:13px;color:#111;transform:scaleX(0.9508);transform-origin:0 50%;-webkit-text-stroke:0.18px #111;">in</span>
<span class="t" style="left:954.30px;top:904.15px;font-size:10px;line-height:13px;color:#111;transform:scaleX(0.9315);transform-origin:0 50%;-webkit-text-stroke:0.18px #111;">10 in</span>
<span class="t" style="left:1246.60px;top:904.15px;font-size:10px;line-height:13px;color:#111;transform:scaleX(0.9471);transform-origin:0 50%;-webkit-text-stroke:0.18px #111;">10.00</span>
<div class="a" style="left:665px;top:917px;width:827.5px;height:1px;background:#e4e4e4"></div>
<span class="t" style="left:685.50px;top:919.15px;font-size:10px;line-height:13px;color:#111;transform:scaleX(1.0045);transform-origin:0 50%;-webkit-text-stroke:0.18px #111;">Linear Dimension-2</span>
<span class="t" style="left:811.70px;top:919.15px;font-size:10px;line-height:13px;color:#111;transform:scaleX(0.9690);transform-origin:0 50%;-webkit-text-stroke:0.18px #111;">SlugSpacing1</span>
<span class="t" style="left:901.80px;top:919.15px;font-size:10px;line-height:13px;color:#111;transform:scaleX(0.9508);transform-origin:0 50%;-webkit-text-stroke:0.18px #111;">in</span>
<span class="t" style="left:954.30px;top:919.15px;font-size:10px;line-height:13px;color:#111;transform:scaleX(0.9315);transform-origin:0 50%;-webkit-text-stroke:0.18px #111;">10 in</span>
<span class="t" style="left:1246.60px;top:919.15px;font-size:10px;line-height:13px;color:#111;transform:scaleX(0.9471);transform-origin:0 50%;-webkit-text-stroke:0.18px #111;">10.00</span>
<svg width="1920" height="1080" viewBox="0 0 1920 1080" style="left:0;top:0">
<path d="M6,0.5 L7.6,4.1 L11.5,4.5 L8.6,7.1 L9.4,11 L6,9 L2.6,11 L3.4,7.1 L0.5,4.5 L4.4,4.1 Z" transform="translate(667.6,723.6)" fill="#f5a524" stroke="#e8901a" stroke-width="0.5" stroke-linejoin="round"/>
<path d="M6,0.5 L7.6,4.1 L11.5,4.5 L8.6,7.1 L9.4,11 L6,9 L2.6,11 L3.4,7.1 L0.5,4.5 L4.4,4.1 Z" transform="translate(667.6,738.6)" fill="#f5a524" stroke="#e8901a" stroke-width="0.5" stroke-linejoin="round"/>
<path d="M6,0.5 L7.6,4.1 L11.5,4.5 L8.6,7.1 L9.4,11 L6,9 L2.6,11 L3.4,7.1 L0.5,4.5 L4.4,4.1 Z" transform="translate(667.6,753.6)" fill="#f5a524" stroke="#e8901a" stroke-width="0.5" stroke-linejoin="round"/>
<path d="M6,0.5 L7.6,4.1 L11.5,4.5 L8.6,7.1 L9.4,11 L6,9 L2.6,11 L3.4,7.1 L0.5,4.5 L4.4,4.1 Z" transform="translate(667.6,768.6)" fill="#f5a524" stroke="#e8901a" stroke-width="0.5" stroke-linejoin="round"/>
<path d="M6,0.5 L7.6,4.1 L11.5,4.5 L8.6,7.1 L9.4,11 L6,9 L2.6,11 L3.4,7.1 L0.5,4.5 L4.4,4.1 Z" transform="translate(667.6,783.6)" fill="#f5a524" stroke="#e8901a" stroke-width="0.5" stroke-linejoin="round"/>
<path d="M6,0.5 L7.6,4.1 L11.5,4.5 L8.6,7.1 L9.4,11 L6,9 L2.6,11 L3.4,7.1 L0.5,4.5 L4.4,4.1 Z" transform="translate(667.6,798.6)" fill="#f5a524" stroke="#e8901a" stroke-width="0.5" stroke-linejoin="round"/>
<path d="M6,0.5 L7.6,4.1 L11.5,4.5 L8.6,7.1 L9.4,11 L6,9 L2.6,11 L3.4,7.1 L0.5,4.5 L4.4,4.1 Z" transform="translate(667.6,813.6)" fill="#f5a524" stroke="#e8901a" stroke-width="0.5" stroke-linejoin="round"/>
<path d="M6,0.5 L7.6,4.1 L11.5,4.5 L8.6,7.1 L9.4,11 L6,9 L2.6,11 L3.4,7.1 L0.5,4.5 L4.4,4.1 Z" transform="translate(667.6,828.6)" fill="#f5a524" stroke="#e8901a" stroke-width="0.5" stroke-linejoin="round"/>
<path d="M6,0.5 L7.6,4.1 L11.5,4.5 L8.6,7.1 L9.4,11 L6,9 L2.6,11 L3.4,7.1 L0.5,4.5 L4.4,4.1 Z" transform="translate(667.6,843.6)" fill="#f5a524" stroke="#e8901a" stroke-width="0.5" stroke-linejoin="round"/>
<path d="M6,0.5 L7.6,4.1 L11.5,4.5 L8.6,7.1 L9.4,11 L6,9 L2.6,11 L3.4,7.1 L0.5,4.5 L4.4,4.1 Z" transform="translate(667.6,858.6)" fill="#f5a524" stroke="#e8901a" stroke-width="0.5" stroke-linejoin="round"/>
<path d="M6,0.5 L7.6,4.1 L11.5,4.5 L8.6,7.1 L9.4,11 L6,9 L2.6,11 L3.4,7.1 L0.5,4.5 L4.4,4.1 Z" transform="translate(667.6,873.6)" fill="#f5a524" stroke="#e8901a" stroke-width="0.5" stroke-linejoin="round"/>
<path d="M6,0.5 L7.6,4.1 L11.5,4.5 L8.6,7.1 L9.4,11 L6,9 L2.6,11 L3.4,7.1 L0.5,4.5 L4.4,4.1 Z" transform="translate(667.6,888.6)" fill="#f5a524" stroke="#e8901a" stroke-width="0.5" stroke-linejoin="round"/>
<path d="M6,0.5 L7.6,4.1 L11.5,4.5 L8.6,7.1 L9.4,11 L6,9 L2.6,11 L3.4,7.1 L0.5,4.5 L4.4,4.1 Z" transform="translate(667.6,903.6)" fill="#f5a524" stroke="#e8901a" stroke-width="0.5" stroke-linejoin="round"/>
<path d="M6,0.5 L7.6,4.1 L11.5,4.5 L8.6,7.1 L9.4,11 L6,9 L2.6,11 L3.4,7.1 L0.5,4.5 L4.4,4.1 Z" transform="translate(667.6,918.6)" fill="#f5a524" stroke="#e8901a" stroke-width="0.5" stroke-linejoin="round"/>
</svg>
<div class="a" style="left:650.3px;top:932px;width:842.2px;height:15.6px;background:#cacaca"></div>
<div class="a" style="left:650.3px;top:948.2px;width:842.2px;height:8px;background:#cacaca"></div>
<div class="a" style="left:650.3px;top:947.4px;width:842.2px;height:0.9px;background:#b4b4b4"></div>
<div class="a" style="left:807.5px;top:932px;width:1px;height:24px;background:#b9b9b9"></div>
<div class="a" style="left:897.5px;top:932px;width:1px;height:24px;background:#b9b9b9"></div>
<div class="a" style="left:949.7px;top:932px;width:1px;height:24px;background:#b9b9b9"></div>
<div class="a" style="left:1243px;top:932px;width:1px;height:24px;background:#b9b9b9"></div>
<div class="a" style="left:1378px;top:932px;width:1px;height:24px;background:#b9b9b9"></div>
<span class="t" style="left:654.30px;top:934.22px;font-size:9.8px;line-height:13px;color:#0c0c0c;font-weight:bold;transform:scaleX(1.0217);transform-origin:0 50%;-webkit-text-stroke:0.25px #0c0c0c;">User Parameters</span>
<svg width="9" height="9" viewBox="0 0 9 9" style="left:792.6px;top:935.2px"><path d="M0.5,4.3 L8.1,4.3 M4.3,0.5 L4.3,8.1" stroke="#555" stroke-width="0.9"/></svg>
<div class="a" style="left:654.3px;top:951.2px;width:90px;height:4.9px;overflow:hidden"><span class="t" style="left:0;top:0.2px;font-size:9.8px;line-height:12px;font-weight:bold;color:#0c0c0c;-webkit-text-stroke:0.25px #0c0c0c;transform:scaleX(0.98);transform-origin:0 0">Model Parameters</span></div>
<div class="a" style="left:640.4px;top:952.8px;width:5.6px;height:1.5px;background:#8f8f8f"></div>
<div class="a" style="left:635.5px;top:956.2px;width:868px;height:8px;background:#fbfbfb"></div>
<div class="a" style="left:637.5px;top:957px;width:832.5px;height:6.2px;border-radius:3.1px;background:#c1c1c1"></div>
<div class="a" style="left:1492.5px;top:696px;width:11px;height:260px;background:#fafafa;border-left:1px solid #e8e8e8;box-sizing:border-box"></div>
<div class="a" style="left:1495.6px;top:697px;width:5.8px;height:73px;border-radius:2.9px;background:#7c7c7c"></div>
<div class="a" style="left:1446px;top:979px;width:52px;height:16px;border-radius:3.5px;background:linear-gradient(#4c9bfa,#0f68ee 55%,#0a5ce0);box-shadow:0 0.5px 1px rgba(0,0,0,0.35)"></div>
<span class="t" style="left:1465.60px;top:981.79px;font-size:9.6px;line-height:12px;color:#fff;transform:scaleX(0.9661);transform-origin:0 50%;">OK</span>
<svg width="12" height="16" viewBox="0 0 12 16" style="left:1499.6px;top:708.6px"><path d="M1,0.8 L1,11.6 L3.5,9.4 L5.4,13.6 L7.2,12.8 L5.3,8.8 L8.6,8.6 Z" fill="#111" stroke="#fff" stroke-width="0.9" stroke-linejoin="round"/></svg>
<svg width="1920" height="24" viewBox="0 0 1920 24" style="left:0;top:0">
<rect x="7.0" y="7.0" width="2.9" height="2.8" fill="#4a4a4a"/>
<rect x="10.6" y="7.0" width="2.9" height="2.8" fill="#4a4a4a"/>
<rect x="14.2" y="7.0" width="2.9" height="2.8" fill="#4a4a4a"/>
<rect x="7.0" y="10.5" width="2.9" height="2.8" fill="#4a4a4a"/>
<rect x="10.6" y="10.5" width="2.9" height="2.8" fill="#4a4a4a"/>
<rect x="14.2" y="10.5" width="2.9" height="2.8" fill="#4a4a4a"/>
<rect x="7.0" y="14.0" width="2.9" height="2.8" fill="#4a4a4a"/>
<rect x="10.6" y="14.0" width="2.9" height="2.8" fill="#4a4a4a"/>
<rect x="14.2" y="14.0" width="2.9" height="2.8" fill="#4a4a4a"/>
<path d="M31.5,6 L38,6 L41,9 L41,17.6 L31.5,17.6 Z" fill="#4a4a4a"/>
<path d="M38,6 L38,9 L41,9 Z" fill="#8d8d8d"/>
<path d="M46,10 L51.2,10 L48.6,13.3 Z" fill="#4a4a4a"/>
<path d="M65,7 L74.5,7 L76,8.5 L76,17 L65,17 Z" fill="#4a4a4a"/>
<rect x="67.3" y="7.6" width="6" height="3" fill="#c7c7c7"/>
<rect x="67.6" y="13" width="5.6" height="4" fill="#c7c7c7"/>
<rect x="70.8" y="13.8" width="1.6" height="2.6" fill="#4a4a4a"/>
<path d="M94.5,8.2 L90.6,11.6 L94.5,15" fill="none" stroke="#8a8a8a" stroke-width="1.5" stroke-linejoin="round" stroke-linecap="round"/>
<path d="M91,11.6 L95.5,11.6 Q99.5,11.8 99.6,16.2" fill="none" stroke="#8a8a8a" stroke-width="1.5" stroke-linecap="round"/>
<path d="M105,10 L110,10 L107.5,13.2 Z" fill="#8a8a8a"/>
<path d="M125.5,8.2 L129.4,11.6 L125.5,15" fill="none" stroke="#8a8a8a" stroke-width="1.5" stroke-linejoin="round" stroke-linecap="round"/>
<path d="M129,11.6 L124.5,11.6 Q120.5,11.8 120.4,16.2" fill="none" stroke="#8a8a8a" stroke-width="1.5" stroke-linecap="round"/>
<path d="M135,10 L140,10 L137.5,13.2 Z" fill="#8a8a8a"/>
<path d="M160,9 L165.6,14 L164.2,14 L164.2,18.3 L155.8,18.3 L155.8,14 L154.4,14 Z" fill="#5e5e5e"/>
<rect x="158.9" y="15.3" width="2.2" height="3" fill="#b3b3b3"/>
<rect x="162.6" y="9.6" width="1.3" height="2.6" fill="#5e5e5e"/>
<path d="M909.3,9 L916.5,8 L921.2,9 L921.2,15.6 L914.3,18.6 L909.3,16.4 Z" fill="#5a5a5a"/>
<path d="M909.9,10.2 L914,11.3 L914,17.6 L909.9,15.9 Z" fill="#a2a2a2"/>
<path d="M1749,10.5 L1755,16.5 M1755,10.5 L1749,16.5" stroke="#5a5a5a" stroke-width="1.1"/>
<path d="M1769,13.2 L1779,13.2 M1774,8.2 L1774,18.2" stroke="#5a5a5a" stroke-width="1.7"/>
<circle cx="1799" cy="12.2" r="5.6" fill="#555"/>
<path d="M1796.2,12.6 A2.9,2.9 0 1 0 1799.4,9.3" fill="none" stroke="#c7c7c7" stroke-width="1.2"/>
<path d="M1799.5,9.2 L1802.6,8 L1801.6,11 Z" fill="#c7c7c7"/>
<circle cx="1824" cy="12.2" r="5.3" fill="#555" stroke="#555" stroke-width="1"/>
<circle cx="1824" cy="12.2" r="4.1" fill="none" stroke="#c7c7c7" stroke-width="0.7"/>
<path d="M1824,9 L1824,12.4 L1826.8,12.4" fill="none" stroke="#dcdcdc" stroke-width="1.1"/>
<path d="M1848.4,6.8 Q1852.2,7.2 1852.2,11.5 L1852.2,14 L1853.6,15.8 L1843.2,15.8 L1844.6,14 L1844.6,11.5 Q1844.6,7.2 1848.4,6.8 Z" fill="#555"/>
<rect x="1847.2" y="16.3" width="2.4" height="1.5" rx="0.7" fill="#555"/>
<circle cx="1851.8" cy="8.2" r="2.4" fill="#3b8fd6"/>
<circle cx="1873.4" cy="12.2" r="5.8" fill="#505050"/>
</svg>
<span class="t" style="left:1870.60px;top:6.16px;font-size:10px;line-height:13px;color:#d8d8d8;font-weight:bold;transform:scaleX(1.0001);transform-origin:0 50%;">?</span>
<svg width="20" height="22" viewBox="1893 1 20 22" style="left:1893px;top:1px"><defs><clipPath id="avc"><circle cx="1903" cy="12" r="8.9"/></clipPath></defs><circle cx="1903" cy="12" r="8.9" fill="#c6c9cf"/><g clip-path="url(#avc)"><path d="M1896.4,19.6 L1900,17.4 L1902.4,21.5 L1896,21.5 Z" fill="#141414"/><path d="M1909.2,19.4 L1905.2,17.2 L1903.4,21.5 L1910,21.5 Z" fill="#141414"/><path d="M1899.8,17.4 L1902.4,21.5 L1903.6,21.5 L1905.4,17.2 L1902.6,18.6 Z" fill="#f1f1f1"/><path d="M1902.2,18.8 L1903.2,18.8 L1903.6,21.5 L1901.8,21.5 Z" fill="#3b4048"/><ellipse cx="1902" cy="13.6" rx="2.9" ry="4.2" fill="#a06e42"/><path d="M1899.6,15.4 Q1902,19.4 1904.8,15.6 Q1904.4,18.6 1902.2,18.8 Q1900,18.4 1899.6,15.4 Z" fill="#7b5530"/><path d="M1903.4,10 L1906.6,10.4 L1906,15.8 L1904.2,16.6 Z" fill="#4a3019"/><path d="M1895,10.8 Q1897.6,7 1901,6.6 Q1905.6,6 1910,12.2 Q1907.6,14.6 1905,12 Q1901,10 1896.6,12.2 Z" fill="#4a321b"/><path d="M1898.8,8.4 Q1900,5 1902.2,4.8 Q1904.6,4.8 1906.2,8.6 Q1902.6,7.2 1898.8,8.4 Z" fill="#80592e"/></g></svg>
<span class="t" style="left:924.00px;top:7.22px;font-size:9.8px;line-height:13px;color:#3c3c3c;transform:scaleX(0.9916);transform-origin:0 50%;">Sideboard V2 v62 v2*</span>
<span class="t" style="left:112.50px;top:26.64px;font-size:8.6px;line-height:11px;color:#2f7fc1;transform:scaleX(0.9880);transform-origin:0 50%;-webkit-text-stroke:0.35px #2f7fc1;">SOLID</span>
<div class="a" style="left:103.5px;top:39.3px;width:44px;height:2.2px;background:#3a8fd2"></div>
<span class="t" style="left:171.00px;top:26.64px;font-size:8.6px;line-height:11px;color:#404040;transform:scaleX(0.8690);transform-origin:0 50%;">SURFACE</span>
<span class="t" style="left:240.80px;top:26.64px;font-size:8.6px;line-height:11px;color:#404040;transform:scaleX(0.8733);transform-origin:0 50%;">MESH</span>
<span class="t" style="left:295.80px;top:26.64px;font-size:8.6px;line-height:11px;color:#404040;transform:scaleX(0.9060);transform-origin:0 50%;">SHEET METAL</span>
<span class="t" style="left:384.70px;top:26.64px;font-size:8.6px;line-height:11px;color:#404040;transform:scaleX(0.8829);transform-origin:0 50%;">TOOLS</span>
<div class="a" style="left:9px;top:32.5px;width:81.5px;height:44.5px;box-sizing:border-box;border:1px solid #dadada;border-radius:3.5px;background:#f3f3f3"></div>
<span class="t" style="left:30.80px;top:49.64px;font-size:8.6px;line-height:11px;color:#2e2e2e;font-weight:bold;transform:scaleX(0.9402);transform-origin:0 50%;">DESIGN</span>
<svg width="6" height="4" viewBox="0 0 6 4" style="left:65.3px;top:53px"><path d="M0.3,0.3 L4.5,0.3 L2.4,3.2 Z" fill="#2e2e2e"/></svg>
<span class="t" style="left:174.50px;top:72.64px;font-size:8.6px;line-height:11px;color:#3a3a3a;transform:scaleX(0.8994);transform-origin:0 50%;">CREATE</span>
<svg width="5" height="4" viewBox="0 0 5 4" style="left:207px;top:75.8px"><path d="M0.2,0.2 L4.2,0.2 L2.2,3 Z" fill="#333"/></svg>
<span class="t" style="left:376.20px;top:72.64px;font-size:8.6px;line-height:11px;color:#3a3a3a;transform:scaleX(0.9270);transform-origin:0 50%;">MODIFY</span>
<svg width="5" height="4" viewBox="0 0 5 4" style="left:409.5px;top:75.8px"><path d="M0.2,0.2 L4.2,0.2 L2.2,3 Z" fill="#333"/></svg>
<span class="t" style="left:510.30px;top:72.64px;font-size:8.6px;line-height:11px;color:#3a3a3a;transform:scaleX(0.8563);transform-origin:0 50%;">ASSEMBLE</span>
<svg width="5" height="4" viewBox="0 0 5 4" style="left:552.2px;top:75.8px"><path d="M0.2,0.2 L4.2,0.2 L2.2,3 Z" fill="#333"/></svg>
<span class="t" style="left:581.30px;top:72.64px;font-size:8.6px;line-height:11px;color:#3a3a3a;transform:scaleX(0.9391);transform-origin:0 50%;">CONSTRUCT</span>
<svg width="5" height="4" viewBox="0 0 5 4" style="left:633.8px;top:75.8px"><path d="M0.2,0.2 L4.2,0.2 L2.2,3 Z" fill="#333"/></svg>
<span class="t" style="left:658.80px;top:72.64px;font-size:8.6px;line-height:11px;color:#3a3a3a;transform:scaleX(0.9176);transform-origin:0 50%;">INSPECT</span>
<svg width="5" height="4" viewBox="0 0 5 4" style="left:695px;top:75.8px"><path d="M0.2,0.2 L4.2,0.2 L2.2,3 Z" fill="#333"/></svg>
<span class="t" style="left:741.70px;top:72.64px;font-size:8.6px;line-height:11px;color:#3a3a3a;transform:scaleX(0.9018);transform-origin:0 50%;">INSERT</span>
<svg width="5" height="4" viewBox="0 0 5 4" style="left:772px;top:75.8px"><path d="M0.2,0.2 L4.2,0.2 L2.2,3 Z" fill="#333"/></svg>
<span class="t" style="left:823.30px;top:72.64px;font-size:8.6px;line-height:11px;color:#3a3a3a;transform:scaleX(0.8967);transform-origin:0 50%;">SELECT</span>
<svg width="5" height="4" viewBox="0 0 5 4" style="left:855px;top:75.8px"><path d="M0.2,0.2 L4.2,0.2 L2.2,3 Z" fill="#333"/></svg>
<div class="a" style="left:295px;top:44px;width:1px;height:38px;background:#dcdcdc"></div>
<div class="a" style="left:497.5px;top:44px;width:1px;height:38px;background:#dcdcdc"></div>
<div class="a" style="left:569.8px;top:44px;width:1px;height:38px;background:#dcdcdc"></div>
<div class="a" style="left:647.5px;top:44px;width:1px;height:38px;background:#dcdcdc"></div>
<div class="a" style="left:707.5px;top:44px;width:1px;height:38px;background:#dcdcdc"></div>
<div class="a" style="left:812.3px;top:44px;width:1px;height:38px;background:#dcdcdc"></div>
<svg width="1920" height="1080" viewBox="0 0 1920 1080" style="left:0;top:0">
<path d="M107,45.2 L121.8,45.2 M104,48 L104,63 M107,65.6 L116,65.6 M124,48 L124,57.5" stroke="#5a5a5a" stroke-width="1.1" fill="none"/>
<rect x="102.8" y="44.0" width="2.4" height="2.4" fill="#444"/>
<rect x="122.8" y="44.0" width="2.4" height="2.4" fill="#444"/>
<rect x="102.8" y="64.39999999999999" width="2.4" height="2.4" fill="#444"/>
<path d="M111.5,50.6 L117,50.6 M109,53 L109,58" stroke="#5a5a5a" stroke-width="1" fill="none"/>
<path d="M119,52.5 Q118.4,58.8 110.8,60.2" stroke="#5a5a5a" stroke-width="1" fill="none"/>
<rect x="108" y="49.6" width="2" height="2" fill="#444"/>
<rect x="118" y="49.6" width="2" height="2" fill="#444"/>
<rect x="108" y="59.2" width="2" height="2" fill="#444"/>
<path d="M121.4,57.6 L121.4,68.2 M116.2,62.9 L126.8,62.9" stroke="#3b3b3b" stroke-width="2.7" fill="none"/>
<path d="M136.3,63.7 L149.5,63.7 L153.7,60 L153.7,63.6 L149.5,67.6 L136.3,67.6 Z" fill="#c9c9c9"/>
<rect x="136.3" y="47.8" width="13.2" height="15.9" fill="#4f9edb"/>
<path d="M136.3,47.8 L140.5,44 L153.7,44 L149.5,47.8 Z" fill="#7fbdec"/>
<path d="M149.5,47.8 L153.7,44 L153.7,60 L149.5,63.7 Z" fill="#3c86c4"/>
<path d="M156.6,47 L156.6,64" stroke="#333333" stroke-width="1"/><path d="M156.6,44.6 L158.8,48.4 L154.4,48.4 Z" fill="#333333"/>
<path d="M167.2,54.6 Q178,46.6 190.6,53 L190.6,61 Q178.6,56.4 171.4,65.6 L167.2,62 Z" fill="#4f9edb"/>
<path d="M167.2,54.6 Q178,46.6 190.6,53 L187.4,56.2 Q178,52 171.4,58.4 Z" fill="#7fbdec"/>
<path d="M167.2,54.6 L171.4,58.4 L171.4,65.6 L167.2,62 Z" fill="#3c86c4"/>
<path d="M187.4,56.2 L190.6,53 L190.6,61.4 L187.4,64.6 Z" fill="#f4f4f4" stroke="#5a5a5a" stroke-width="0.8"/>
<path d="M169.6,49 Q180,42.8 188.6,49.6" fill="none" stroke="#333333" stroke-width="0.9"/><path d="M167.8,49.8 L171.8,47 L171.4,50.8 Z" fill="#333333"/>
<path d="M199.6,50.4 L205,44.6 L223.2,44.6 L223.2,61 L217.9,67 L199.6,67 Z" fill="#d6d6d6" stroke="#777" stroke-width="1" stroke-linejoin="round"/>
<path d="M199.6,50.4 L205,44.6 L223.2,44.6 L217.9,50.4 Z" fill="#efefef"/>
<path d="M217.9,50.4 L223.2,44.6 L223.2,61 L217.9,67 Z" fill="#b9b9b9"/>
<path d="M199.6,50.4 L217.9,50.4 L217.9,67" fill="none" stroke="#e4e4e4" stroke-width="0.8"/>
<circle cx="208.4" cy="58.9" r="5.9" fill="#4f9edb" stroke="#7d8a94" stroke-width="0.9"/>
<path d="M208.6,53.6 A5.4,5.4 0 0 1 213.7,59.6 A6,6 0 0 1 208.6,53.6 Z" fill="#f3f7fa"/>
<path d="M239,48.2 L247.6,48.2 M234.6,52.4 L234.6,61.4 M239,64.3 L247.6,64.3" stroke="#5a5a5a" stroke-width="1" fill="none"/>
<rect x="232.4" y="46" width="4.5" height="4.5" fill="#fff" stroke="#5a5a5a" stroke-width="0.9"/>
<rect x="247.8" y="46" width="4.9" height="4.9" fill="#4a97d4"/>
<rect x="232.4" y="62" width="4.9" height="4.9" fill="#4a97d4"/>
<rect x="247.8" y="62" width="4.9" height="4.9" fill="#4a97d4"/>
<path d="M271,46.2 L280,46.2 Q287.6,46.6 287.4,56 L287.2,61 Q286.6,67.2 279,67.4 L271,67.4 Q264.4,67.2 264.4,60.6 L264.4,53 Q264.6,46.4 271,46.2 Z" fill="#dfe9f3" stroke="#9fb9cc" stroke-width="0.7"/>
<path d="M266.4,53.5 L277,53.5 L277,56.6 L279.6,56.6 L279.6,63.8 Q278,66.6 274,66.6 L269.6,66.6 Q265.4,66 265.4,61 Z" fill="#9a6ee0"/>
<path d="M268.8,47.6 L276,47.2 L275,49.6 L269.8,50.2 Z" fill="#9a6ee0" opacity="0.8"/>
<path d="M282.2,55.4 L286.2,56.4 Q286.6,62 282.4,65.2 L281,63 Q282.6,59 282.2,55.4 Z" fill="#5f8fb7"/>
<path d="M281.4,45 L283,48.2 L286.6,47.2 L285,50.6 L287.8,52.4 L284.4,53.2 L283.8,56.6 L281.4,54 L278.6,55.8 L278.8,52.4 L275.6,51 L278.8,49.6 L278.4,46 Z" fill="#e08a4c"/>
<path d="M305.2,49 L309.6,44.4 L313,44.4 L313,67.4 L305.2,67.4 Z" fill="#d6d6d6" stroke="#666" stroke-width="1"/>
<rect x="310.8" y="48.6" width="7.4" height="19" fill="#4f9edb"/>
<path d="M310.8,48.6 L314.6,44.2 L321.6,44.2 L318.2,48.6 Z" fill="#7fbdec"/>
<path d="M318.2,48.6 L321.6,44.2 L321.6,63.2 L318.2,67.6 Z" fill="#3c86c4"/>
<path d="M319.6,55.6 L324,55.6" stroke="#dfe9f2" stroke-width="1.4"/><path d="M322,55.6 L324.4,55.6" stroke="#333333" stroke-width="0.9"/><path d="M326.8,55.6 L323.8,53.6 L323.8,57.6 Z" fill="#333333"/>
<path d="M337.4,49.6 L342.6,44.4 L348,44.4 Q360,46 360.4,58.6 L360.4,62.4 L355.4,67.4 L337.4,67.4 Z" fill="#d6d6d6" stroke="#6a6a6a" stroke-width="1" stroke-linejoin="round"/>
<path d="M337.4,49.6 L342.6,44.4 L348,44.4 Q351,44.6 352.6,45.6 L346.6,49.8 Z" fill="#efefef"/>
<path d="M355.4,59.4 L360.4,57 L360.4,62.4 L355.4,67.4 Z" fill="#b9b9b9"/>
<path d="M346.4,49.6 L351,44.8 Q360,46.8 360.2,57.2 L355.2,59.6 Q355,51.4 346.4,49.6 Z" fill="#5ea3da" stroke="#e8f1f8" stroke-width="0.5"/>
<path d="M369.4,50 L375,44.4 L392.4,44.4 L392.4,62 L387,67.4 L369.4,67.4 Z" fill="#dfdfdf" stroke="#5f5f5f" stroke-width="1" stroke-linejoin="round"/>
<path d="M369.4,50 L375,44.4 L392.4,44.4 L387,50 Z" fill="#f4f4f4"/>
<path d="M387,50 L392.4,44.4 L392.4,62 L387,67.4 Z" fill="#b9b9b9"/>
<path d="M369.4,50 L387,50 L387,67.4" fill="none" stroke="#5f5f5f" stroke-width="0.7" opacity="0.5"/>
<rect x="371.6" y="52.4" width="13.2" height="12.6" fill="#fbfbfb"/>
<path d="M372,53.2 L377.8,53.2 L377.8,59.2 L373.6,64.4 L372,64.4 Z" fill="#3f86be"/>
<path d="M377.8,59.2 L383.8,59.2 L383.8,64.4 L373.6,64.4 Z" fill="#79b8e8"/>
<rect x="401.4" y="54.6" width="15" height="13" fill="#4f9edb"/>
<path d="M401.4,54.6 L405.4,50.6 L420.4,50.6 L416.4,54.6 Z" fill="#7fbdec"/>
<path d="M416.4,54.6 L420.4,50.6 L420.4,63.6 L416.4,67.6 Z" fill="#3c86c4"/>
<rect x="409.4" y="48" width="12.6" height="12" fill="#4f9edb"/>
<path d="M409.4,48 L413,44.2 L425.2,44.2 L422,48 Z" fill="#7fbdec"/>
<path d="M422,48 L425.2,44.2 L425.2,56.6 L422,60 Z" fill="#3c86c4"/>
<path d="M435.6,60 L452,60 L455.6,57 L455.6,63.8 L452,67.2 L435.6,67.2 Z" fill="#d6d6d6" stroke="#8a8a8a" stroke-width="0.8"/>
<path d="M452,60 L455.6,57 L455.6,63.8 L452,67.2 Z" fill="#b9b9b9"/>
<path d="M433.4,58.6 L452.6,58.6 L458,54.6" fill="none" stroke="#a7cdea" stroke-width="1.6"/>
<path d="M433.4,58.8 L452.6,58.8 L458,54.8" fill="none" stroke="#5f9fd0" stroke-width="0.5"/>
<rect x="435.6" y="48.4" width="16.4" height="7.4" fill="#4f9edb"/>
<path d="M435.6,48.4 L440,44.2 L455.6,44.2 L452,48.4 Z" fill="#7fbdec"/>
<path d="M452,48.4 L455.6,44.2 L455.6,52.2 L452,55.8 Z" fill="#3c86c4"/>
<path d="M471.2,56.2 L484.40000000000003,56.2 M477.8,49.60000000000001 L477.8,62.8" stroke="#2b2b2b" stroke-width="1.7" fill="none"/>
<path d="M489.60,56.20 L484.40,60.26 L484.40,52.14 Z" fill="#2b2b2b"/>
<path d="M466.00,56.20 L471.20,52.14 L471.20,60.26 Z" fill="#2b2b2b"/>
<path d="M477.80,68.00 L473.74,62.80 L481.86,62.80 Z" fill="#2b2b2b"/>
<path d="M477.80,44.40 L481.86,49.60 L473.74,49.60 Z" fill="#2b2b2b"/>
<path d="M506.2,58.8 L515.6,58.8 L515.6,67.2 L506.2,67.2 Z" fill="#e2e2e2" stroke="#555" stroke-width="0.9"/>
<path d="M515.6,58.8 L524,58.8 L524,67.2 L515.6,67.2 Z" fill="#e2e2e2" stroke="#555" stroke-width="0.9"/>
<path d="M515.6,58.8 L518,56.4 L526.6,56.4 L524,58.8 Z" fill="#f2f2f2" stroke="#555" stroke-width="0.7"/>
<path d="M524,58.800 L526.6,56.4 L526.6,64.6 L524,67.2 Z" fill="#b9b9b9" stroke="#555" stroke-width="0.7"/>
<rect x="506" y="50" width="9.2" height="8.8" fill="#4f9edb"/>
<path d="M506,50 L509,47 L518.2,47 L515.2,50 Z" fill="#7fbdec"/>
<path d="M515.2,50 L518.2,47 L518.2,55.800 L515.2,58.8 Z" fill="#3c86c4"/>
<path d="M524,44.6 L525.6,47.6 L528.8,46.6 L527.8,49.8 L530.6,51.4 L527.6,52.6 L528,55.8 L525,54.6 L522.8,57 L521.8,53.8 L518.6,53.4 L520.6,50.8 L519,48 L522.2,47.8 Z" fill="#f3a832"/>
<circle cx="524.4" cy="50.8" r="1.8" fill="#c98a3a"/>
<path d="M540.6,51.4 L545.6,46.6 L548.4,46.2 L549.4,47 L549.4,53.4 L546.2,54.4 L546.2,61.6 L541.8,65.4 L540.6,64.8 Z" fill="#d6d6d6" stroke="#5e5e5e" stroke-width="0.9" stroke-linejoin="round"/>
<ellipse cx="547.2" cy="46.8" rx="1.8" ry="0.8" fill="#8d8d8d"/>
<path d="M551.6,53.6 L555.4,54.6 L555.4,47.6 L560.6,51.8 L560.6,65.8 L555.4,61.6 L551.6,61 Z" fill="#d6d6d6" stroke="#5e5e5e" stroke-width="0.9" stroke-linejoin="round"/>
<path d="M553.4,50.6 L553.4,54.6 M547.4,54.8 L547.4,58" stroke="#4f97d2" stroke-width="0.9"/>
<path d="M582.4,59.6 L586,56 L591.6,56 L591.6,66.4 L582.4,66.4 Z" fill="#dedede" stroke="#5a5a5a" stroke-width="0.9"/>
<path d="M591.6,61.6 L593.6,63.2 L592,65.6 Z" fill="#3f82bd"/>
<path d="M592.2,44.8 L603.2,56.6 L595.4,64 L584.2,52.4 Z" fill="#dd8a4e"/>
<path d="M590.4,53 L594,49.8 L597,57.4 L596,61.6 L591.6,57.6 Z" fill="#e9d4b4"/>
<path d="M592.6,57.8 L595.8,50.6" stroke="#6f7f90" stroke-width="0.9"/>
<path d="M597.8,55.6 L597.8,60.4" stroke="#f7a81e" stroke-width="0.9" stroke-dasharray="1 0.9"/>
<path d="M614.6,50.6 L620.8,44.8 L626,44.8 L621.4,50.4 L621.4,67.2 L614.6,67.2 Z" fill="#e9e9e9" stroke="#555" stroke-width="0.9" stroke-linejoin="round"/>
<path d="M621.4,50.4 L627.8,44.6 L627.8,61.2 L621.4,67.2 Z" fill="#5f7080"/>
<path d="M630.2,52 L637,44.6 L637,59.4 L630.2,66.8 Z" fill="#dd8a4e"/>
<path d="M667.6,50.2 L667.6,56.6 M688.4,50.2 L688.4,56.6" stroke="#7a7a7a" stroke-width="0.9"/>
<path d="M670,53.6 L686,53.6" stroke="#4a4a4a" stroke-width="0.9"/>
<path d="M668.4,53.6 L671.2,52 L671.2,55.2 Z M687.6,53.6 L684.8,52 L684.8,55.2 Z" fill="#4a4a4a"/>
<rect x="667" y="57.8" width="22" height="4.4" rx="0.8" fill="#f4a524"/>
<path d="M668,59 L688,59" stroke="#c9801a" stroke-width="0.9" stroke-dasharray="1.2 1.6"/>
<path d="M721.4,44.4 L733.4,44.4 L739.8,50.8 L739.8,67.4 L721.4,67.4 Z" fill="#f2f2f2" stroke="#666" stroke-width="0.7"/>
<path d="M721.4,44.4 L732,44.4" stroke="#444" stroke-width="1.1"/>
<path d="M733.4,44.4 L739.8,50.8 L733.4,50.8 Z" fill="#f0a52c"/>
<rect x="721" y="58.6" width="19" height="8.8" fill="#f0a52c"/>
<rect x="731" y="60.4" width="8" height="4.8" fill="#c99863"/>
<circle cx="725.6" cy="63" r="2.9" fill="#4e3b22"/><circle cx="725.6" cy="63" r="1.2" fill="#e08a3a"/>
<path d="M716,50.2 L723.6,50.2 L723.6,48 L729.2,51.6 L723.6,55.4 L723.6,53 L716,53 Z" fill="#1b6fd0"/>
<path d="M752.6,52 L758.6,46.2 L771.6,46.2 L771.6,60 L766,65.6 L752.6,65.6 Z" fill="#e4e4e4" stroke="#444" stroke-width="0.9" stroke-linejoin="round"/>
<path d="M752.6,52 L758.6,46.2 L771.6,46.2 L766,52 Z" fill="#f5f5f5"/>
<path d="M766,52 L771.600,46.2 L771.6,60 L766,65.6 Z" fill="#cfcfcf"/>
<path d="M750,60.8 Q751.4,56.2 756.4,56.4 L756.4,54 L761.4,57.6 L756.4,61.6 L756.4,59 Q752.6,58.6 750,60.8 Z" fill="#222"/>
<rect x="781.6" y="45.2" width="21.4" height="21.4" fill="#7cbcf0"/>
<path d="M781.6,58 L787.4,54 L793,59.6 L797.6,57 L803,60.6 L803,66.6 L781.6,66.6 Z" fill="#2f7fc4"/>
<path d="M781.6,60 L787.4,54 L796,66.600 L781.600,66.6 Z" fill="#3b8bd0" opacity="0.7"/>
<circle cx="797.2" cy="51" r="2.2" fill="#f1f1f1"/>
<rect x="828.8" y="44.4" width="20.6" height="16.2" fill="none" stroke="#5c7890" stroke-width="1" stroke-dasharray="2.6 1.6"/>
<path d="M844.8,55.2 L844.8,65.8 L847.2,63.6 L849,67.6 L850.6,66.8 L848.8,63 L852,62.600 Z" fill="#f6f6f6" stroke="#3a3a3a" stroke-width="0.8" stroke-linejoin="round"/>
</svg>
<div class="a" style="left:871px;top:1020px;width:177px;height:19px;background:#f0f0f0"></div>
<svg width="1920" height="1080" viewBox="0 0 1920 1080" style="left:0;top:0">
<ellipse cx="879" cy="1030" rx="5.4" ry="2.3" fill="none" stroke="#3c3c3c" stroke-width="1.1"/>
<ellipse cx="879.4" cy="1030" rx="1.6" ry="5.6" fill="none" stroke="#3c3c3c" stroke-width="1.1"/>
<path d="M873.2,1031.2 L875.8,1029.6 L875.6,1032.8 Z" fill="#3c3c3c"/>
<rect x="898.3" y="1027" width="11.2" height="8.8" rx="1" fill="none" stroke="#3c3c3c" stroke-width="1.1"/>
<rect x="900.5" y="1029.6" width="6.8" height="3.4" fill="#8f8f8f" stroke="#3c3c3c" stroke-width="0.6"/>
<path d="M899.6,1027 L901.6,1024.4 M902,1025.6 L907.8,1024.4" stroke="#3c3c3c" stroke-width="1" fill="none"/>
<path d="M919.6,1030.6 L919.6,1026.2 M921.6,1030 L921.6,1024.6 M923.6,1030 L923.6,1024.4 M925.6,1030.2 L925.6,1025.4 M927.6,1030.6 L927.6,1027.2" stroke="#3c3c3c" stroke-width="1.25" stroke-linecap="round" fill="none"/>
<path d="M917.4,1029.6 Q919.2,1031.4 920.2,1033.6 Q921.4,1036.2 924.6,1036 Q928,1035.8 928,1032 L928,1030" fill="#f4f4f4" stroke="#3c3c3c" stroke-width="1"/>
<circle cx="940.6" cy="1029.6" r="3.7" fill="#dfe8ee" stroke="#3c3c3c" stroke-width="1.1"/>
<path d="M943.3,1032.5 L946.6,1036" stroke="#3c3c3c" stroke-width="1.9" stroke-linecap="round"/>
<path d="M945.4,1026 L949.2,1026 M947.3,1024.2 L947.3,1027.8 M945.4,1029.6 L949.2,1029.6" stroke="#3c3c3c" stroke-width="0.9"/>
<rect x="956.2" y="1024.4" width="11" height="11.4" fill="none" stroke="#8a8a8a" stroke-width="0.8" stroke-dasharray="1.6 1.4"/>
<circle cx="961.4" cy="1029.6" r="4.4" fill="#e4ecf1" stroke="#3c3c3c" stroke-width="1.1"/>
<path d="M964.6,1033 L967.6,1036.2" stroke="#3c3c3c" stroke-width="2" stroke-linecap="round"/>
<rect x="981.3" y="1024.6" width="11.4" height="8.6" rx="0.8" fill="#7fb2da" stroke="#3c3c3c" stroke-width="1.1"/>
<rect x="982.4" y="1025.6" width="9.2" height="2" fill="#5a86ad"/>
<path d="M985.4,1033.6 L988.6,1033.6 L989.6,1036 L984.4,1036 Z" fill="#9a9a9a" stroke="#3c3c3c" stroke-width="0.5"/>
<rect x="1004.4" y="1024.6" width="11.4" height="11.4" fill="#e8e8e8"/>
<rect x="1008.2" y="1030.2" width="7.6" height="5.8" fill="#9fc3e0"/>
<path d="M1004.40,1024.6 L1004.40,1036 M1004.4,1024.60 L1015.8,1024.60" stroke="#4a4a4a" stroke-width="0.8"/>
<path d="M1007.25,1024.6 L1007.25,1036 M1004.4,1027.45 L1015.8,1027.45" stroke="#4a4a4a" stroke-width="0.8"/>
<path d="M1010.10,1024.6 L1010.10,1036 M1004.4,1030.30 L1015.8,1030.30" stroke="#4a4a4a" stroke-width="0.8"/>
<path d="M1012.95,1024.6 L1012.95,1036 M1004.4,1033.15 L1015.8,1033.15" stroke="#4a4a4a" stroke-width="0.8"/>
<path d="M1015.80,1024.6 L1015.80,1036 M1004.4,1036.00 L1015.8,1036.00" stroke="#4a4a4a" stroke-width="0.8"/>
<rect x="1027.4" y="1025" width="11.6" height="10.6" fill="#6fa6d3"/>
<path d="M1033.2,1025 L1033.2,1035.6 M1027.4,1030.3 L1039,1030.3" stroke="#d6e6f2" stroke-width="0.9"/>
<rect x="1027.4" y="1025" width="11.6" height="10.6" fill="none" stroke="#4a78a0" stroke-width="0.6"/>
<path d="M889.2,1029.2 L893.2,1029.2 L891.2,1031.8 Z" fill="#333"/>
<path d="M972.2,1029.2 L976.2,1029.2 L974.2,1031.8 Z" fill="#333"/>
<path d="M995.4,1029.2 L999.4,1029.2 L997.4,1031.8 Z" fill="#333"/>
<path d="M1018.4,1029.2 L1022.4,1029.2 L1020.4,1031.8 Z" fill="#333"/>
<path d="M1041.6,1029.2 L1045.6,1029.2 L1043.6,1031.8 Z" fill="#333"/>
<path d="M1884.8,1025 L1890.8,1035.6 L1878.8,1035.6 Z" fill="#f2a11c" stroke="#8a5a00" stroke-width="0.6" stroke-linejoin="round"/>
<path d="M1884.8,1028.6 L1884.8,1032.4" stroke="#3a2a00" stroke-width="1.3"/><circle cx="1884.8" cy="1034" r="0.8" fill="#3a2a00"/>
<circle cx="1904.3" cy="1030.3" r="5.9" fill="#2e2e2e"/>
<path d="M1901.4,1032.8 Q1901.6,1027.6 1905,1027.6 Q1907.6,1027.8 1907.4,1032.8 L1905.6,1032.8 Q1905.8,1029.6 1904.6,1029.6 Q1903.4,1029.8 1903.4,1032.8 Z" fill="#f0f0f0"/>
</svg>
<svg width="1920" height="1080" viewBox="0 0 1920 1080" style="left:0;top:0">
<defs><g id="iB"><path d="M0.8,4.6 Q0.8,3.6 1.6,3.3 L4,1.2 Q4.4,0.8 5.2,0.8 L12,0.8 Q13.2,0.8 13.2,2 L13.2,9.2 Q13.2,9.8 12.8,10.2 L10.6,12.6 Q10.2,13 9.6,13 L2,13 Q0.8,13 0.8,11.8 Z" fill="#d9d9d9" stroke="#7c7c7c" stroke-width="0.9"/><path d="M10.2,4 L13,1.4 L13,9.4 L10.2,12.4 Z" fill="#bdbdbd"/><path d="M1.4,3.8 L4.2,1.300 L12.6,1.3 L10,3.8 Z" fill="#efefef"/></g><g id="iE"><path d="M0.4,11.2 L8,11.2 L10,9.2 L10,10.900 L8,12.9 L0.4,12.9 Z" fill="#cfe1ef"/><path d="M0.4,12.5 L8,12.5 L10,10.5" fill="none" stroke="#b4c2cc" stroke-width="0.6"/><rect x="0.5" y="3.1" width="7.4" height="8.2" fill="#4a98d6"/><path d="M0.5,3.1 L2.5,1.1 L9.900,1.1 L7.9,3.1 Z" fill="#79b6e6"/><path d="M7.9,3.1 L9.9,1.1 L9.9,9.300 L7.9,11.3 Z" fill="#3782bf"/><path d="M11.7,1.700 L11.7,10.4" stroke="#222" stroke-width="1.1"/></g><g id="iW"><path d="M0.4,11.2 L8,11.2 L10,9.2 L10,10.9 L8,12.900 L0.4,12.9 Z" fill="#eadbc4"/><rect x="0.5" y="3.1" width="7.400" height="8.2" fill="#dcae72"/><path d="M0.5,3.1 L2.5,1.100 L9.9,1.1 L7.9,3.1 Z" fill="#e8c590"/><path d="M7.9,3.1 L9.9,1.1 L9.9,9.3 L7.900,11.3 Z" fill="#d98a45"/><path d="M11.7,1.7 L11.7,10.400" stroke="#222" stroke-width="1.1"/></g><g id="iS"><path d="M2.4,1.500 L9.600,1.5 M1.5,2.4 L1.5,10.600 M2.4,11.5 L6.600,11.5 M10.5,2.4 L10.5,6" stroke="#4a4a4a" stroke-width="1" fill="none"/><rect x="0.700" y="0.7" width="1.700" height="1.7" fill="#4f97d1"/><rect x="9.700" y="0.700" width="1.7" height="1.7" fill="#4f97d1"/><rect x="0.7" y="10.700" width="1.7" height="1.700" fill="#4f97d1"/><path d="M7.4,12 L11,7.4 L13,9 L9.4,13.2 Z" fill="#f2cb8c"/><path d="M7.4,12 L9.4,13.2 L6.8,13.6 Z" fill="#4a3c28"/><path d="M11,7.4 L11.800,6.4 L13.6,7.8 L13,9 Z" fill="#e98a3c"/></g><g id="iM"><path d="M1.2,12.6 L5.8,12.6 L5.8,2.8 Z" fill="#fafafa" stroke="#7a7a7a" stroke-width="0.9" stroke-linejoin="round"/><path d="M7.4,2 L7.4,12.8 L12.6,12.8 Z" fill="#4a98d6"/></g><g id="iV"><path d="M2.6,7 L11.4,7 M7,2.6 L7,11.4" stroke="#222" stroke-width="1.2"/><path d="M0.6,7 L3.2,5 L3.2,9 Z M13.4,7 L10.8,5 L10.8,9 Z M7,0.6 L5,3.200 L9,3.2 Z M7,13.4 L5,10.8 L9,10.8 Z" fill="#222"/></g><g id="iC"><rect x="0.8" y="6.600" width="7.6" height="6.6" fill="#4a98d6"/><path d="M0.8,6.6 L2.6,4.8 L10.2,4.8 L8.4,6.6 Z" fill="#79b6e6"/><path d="M8.4,6.6 L10.2,4.8 L10.2,11.4 L8.4,13.2 Z" fill="#3782bf"/><rect x="5" y="2.600" width="6.6" height="6" fill="#4a98d6"/><path d="M5,2.6 L6.8,0.8 L13.4,0.800 L11.6,2.6 Z" fill="#79b6e6"/><path d="M11.6,2.6 L13.4,0.8 L13.4,6.8 L11.6,8.6 Z" fill="#3782bf"/></g><g id="iP"><path d="M1,11.600 L4,3.4 L9.6,2.600 Q13.2,3.4 13,7 Q12.6,10.8 9.4,11.6 Z" fill="#cfd3d6" stroke="#666" stroke-width="0.9" stroke-linejoin="round"/><path d="M8.600,4 Q12,4.600 11.8,7.2 Q11.4,9.8 8.6,10.4 Z" fill="#5b9bd0"/><path d="M5.800,1.6 L7.8,0.6 L7.8,12.2 L5.8,13.4 Z" fill="#e59a4a"/><path d="M7.8,3 L9.2,3.2 L9.2,10.8 L7.8,11.2 Z" fill="#ead9be"/></g><g id="iJ"><circle cx="3.8" cy="4.4" r="3.2" fill="#f4f4f4" stroke="#8a8a8a" stroke-width="0.9"/><path d="M2,5 L5.6,5" stroke="#d0d0d0" stroke-width="0.8"/><path d="M6.8,13 L6.8,10 A3.100,3.1 0 0 1 13,10 L13,13 Z" fill="#f4f4f4" stroke="#8a8a8a" stroke-width="0.9"/><path d="M1.8,8.400 Q1.600,11 4,11" fill="none" stroke="#3f8fd0" stroke-width="1.2"/><path d="M6.2,11 L3.800,9.2 L3.8,12.8 Z" fill="#3f8fd0"/></g><g id="iK"><circle cx="3.8" cy="4.4" r="3.2" fill="#f4f4f4" stroke="#8a8a8a" stroke-width="0.9"/><path d="M2,5 L5.6,5" stroke="#d0d0d0" stroke-width="0.8"/><path d="M6.8,13 L6.8,10 A3.100,3.1 0 0 1 13,10 L13,13 Z" fill="#f4f4f4" stroke="#8a8a8a" stroke-width="0.9"/><path d="M1.8,8.400 Q1.600,11 4,11" fill="none" stroke="#e0863c" stroke-width="1.2"/><path d="M6.2,11 L3.800,9.2 L3.8,12.8 Z" fill="#e0863c"/></g><g id="iO"><circle cx="9.6" cy="7.400" r="3.3" fill="#7fb2dc" stroke="#3f556a" stroke-width="0.9"/><path d="M3.200,7.4 L7,7.4" stroke="#111" stroke-width="1.7"/><path d="M1,7.4 L4.400,4.6 L4.4,10.2 Z" fill="#111"/></g><g id="iF"><path d="M0.8,4.6 L3.600,1.4 L7,1.4 Q12.8,2.2 13.200,8.4 L13.2,9.8 L10.4,12.800 L0.8,12.8 Z" fill="#d9d9d9" stroke="#7a7a7a" stroke-width="0.9" stroke-linejoin="round"/><path d="M5.800,4.4 L8.2,1.6 Q12.8,2.8 13,8.400 L10.2,9.6 Q10,5.4 5.8,4.4 Z" fill="#4a98d6"/></g><g id="iI"><rect x="0.8" y="1" width="12.4" height="12" fill="#2f86d6"/><path d="M0.8,8.6 L4.4,5.6 L7.400,8.8 L10,7.2 L13.2,9.6 L13.2,13 L0.8,13 Z" fill="#1f68b8"/><path d="M3.4,3.4 L7,6.2 L9.6,4.2" stroke="#9ccaf2" stroke-width="0.9" fill="none"/><circle cx="10.200" cy="3.6" r="1.1" fill="#e8f2fb"/></g><g id="iX"><path d="M1,1 L6.200,6.2 M6.2,1 L1,6.2" stroke="#e08a2e" stroke-width="1.7"/><rect x="5.800" y="7.4" width="6.6" height="5.4" rx="0.8" fill="#f2f2f2" stroke="#4a86b8" stroke-width="0.9"/><path d="M5.8,7.4 L7.6,5.800 L13.8,5.8 L12.4,7.4" fill="#e2ecf4" stroke="#4a86b8" stroke-width="0.8"/></g><g id="iH"><path d="M0.6,2 L13.4,2 L13.4,8 Q13,12.6 7,13.2 Q1,12.600 0.6,8 Z" fill="#dcae78"/><path d="M3,3.6 L11,3.6 L10.4,7.4 L3.6,7.4 Z" fill="#cf9a60"/><circle cx="7" cy="10" r="2.9" fill="#f7f7f7" stroke="#9a9a9a" stroke-width="0.7"/></g><g id="iT"><path d="M1.4,9 L10.2,9 L12.2,7.400 L12.2,11 L10.2,12.8 L1.4,12.8 Z" fill="#e3e6e8" stroke="#777" stroke-width="0.8"/><rect x="1.4" y="3" width="8.8" height="3.4" fill="#4a98d6"/><path d="M1.4,3 L3.400,1 L12.2,1 L10.2,3 Z" fill="#79b6e6"/><path d="M10.2,3 L12.2,1 L12.2,4.6 L10.2,6.4 Z" fill="#3782bf"/><path d="M0.2,7.700 L10.6,7.7 L13.4,5.4" fill="none" stroke="#9fcbec" stroke-width="1.5"/><path d="M0.2,7.900 L10.6,7.9 L13.4,5.6" fill="none" stroke="#3f8ccc" stroke-width="0.5"/></g></defs>
<path d="M7.6,1058.8 L7.6,1069.6000000000001" stroke="#383838" stroke-width="1.5"/><path d="M17.4,1058.8 L17.4,1069.6000000000001 L9,1064.2 Z" fill="#383838"/>
<path d="M33.800,1059.4 L33.8,1069.0 L27,1064.2 Z" fill="#383838"/><rect x="34.600" y="1061.6000000000001" width="1.6" height="5.2" fill="#383838"/>
<path d="M46.2,1058.6000000000001 L46.2,1069.8 L54.6,1064.2 Z" fill="#383838"/>
<path d="M66.2,1059.4 L66.2,1069.0 L73,1064.2 Z" fill="#383838"/><rect x="63.800" y="1061.6000000000001" width="1.6" height="5.2" fill="#383838"/>
<path d="M83,1058.8 L83,1069.6000000000001 L90.600,1064.2 Z" fill="#383838"/><path d="M91.8,1058.8 L91.8,1069.6000000000001" stroke="#383838" stroke-width="1.5"/>
<path d="M115,1073.9 L1883.8,1073.9" stroke="#c2c2c2" stroke-width="1.3"/>
<path d="M115.5,1069.6 L115.5,1074 M133.5,1069.6 L133.5,1074 M151.5,1069.6 L151.5,1074 M169.5,1069.6 L169.5,1074 M187.5,1069.6 L187.5,1074 M205.5,1069.6 L205.5,1074 M223.5,1069.6 L223.5,1074 M241.5,1069.6 L241.5,1074 M259.5,1069.6 L259.5,1074 M277.5,1069.6 L277.5,1074 M295.5,1069.6 L295.5,1074 M313.5,1069.6 L313.5,1074 M331.5,1069.6 L331.5,1074 M349.5,1069.6 L349.5,1074 M367.5,1069.6 L367.5,1074 M385.5,1069.6 L385.5,1074 M403.5,1069.6 L403.5,1074 M421.5,1069.6 L421.5,1074 M439.5,1069.6 L439.5,1074 M457.5,1069.6 L457.5,1074 M475.5,1069.6 L475.5,1074 M493.5,1069.6 L493.5,1074 M511.5,1069.6 L511.5,1074 M529.5,1069.6 L529.5,1074 M547.5,1069.6 L547.5,1074 M565.5,1069.6 L565.5,1074 M583.5,1069.6 L583.5,1074 M601.5,1069.6 L601.5,1074 M619.5,1069.6 L619.5,1074 M637.5,1069.6 L637.5,1074 M655.5,1069.6 L655.5,1074 M673.5,1069.6 L673.5,1074 M691.5,1069.6 L691.5,1074 M709.5,1069.6 L709.5,1074 M727.5,1069.6 L727.5,1074 M745.5,1069.6 L745.5,1074 M763.5,1069.6 L763.5,1074 M781.5,1069.6 L781.5,1074 M799.5,1069.6 L799.5,1074 M817.5,1069.6 L817.5,1074 M835.5,1069.6 L835.5,1074 M853.5,1069.6 L853.5,1074 M871.5,1069.6 L871.5,1074 M889.5,1069.6 L889.5,1074 M907.5,1069.6 L907.5,1074 M925.5,1069.6 L925.5,1074 M943.5,1069.6 L943.5,1074 M961.5,1069.6 L961.5,1074 M979.5,1069.6 L979.5,1074 M997.5,1069.6 L997.5,1074 M1015.5,1069.6 L1015.5,1074 M1033.5,1069.6 L1033.5,1074 M1051.5,1069.6 L1051.5,1074 M1069.5,1069.6 L1069.5,1074 M1087.5,1069.6 L1087.5,1074 M1105.5,1069.6 L1105.5,1074 M1123.5,1069.6 L1123.5,1074 M1141.5,1069.6 L1141.5,1074 M1159.5,1069.6 L1159.5,1074 M1177.5,1069.6 L1177.5,1074 M1195.5,1069.6 L1195.5,1074 M1213.5,1069.6 L1213.5,1074 M1231.5,1069.6 L1231.5,1074 M1249.5,1069.6 L1249.5,1074 M1267.5,1069.6 L1267.5,1074 M1285.5,1069.6 L1285.5,1074 M1303.5,1069.6 L1303.5,1074 M1321.5,1069.6 L1321.5,1074 M1339.5,1069.6 L1339.5,1074 M1357.5,1069.6 L1357.5,1074 M1375.5,1069.6 L1375.5,1074 M1393.5,1069.6 L1393.5,1074 M1411.5,1069.6 L1411.5,1074 M1429.5,1069.6 L1429.5,1074 M1447.5,1069.6 L1447.5,1074 M1465.5,1069.6 L1465.5,1074 M1483.5,1069.6 L1483.5,1074 M1501.5,1069.6 L1501.5,1074 M1519.5,1069.6 L1519.5,1074 M1537.5,1069.6 L1537.5,1074 M1555.5,1069.6 L1555.5,1074 M1573.5,1069.6 L1573.5,1074 M1591.5,1069.6 L1591.5,1074 M1609.5,1069.6 L1609.5,1074 M1627.5,1069.6 L1627.5,1074 M1645.5,1069.6 L1645.5,1074 M1663.5,1069.6 L1663.5,1074 M1681.5,1069.6 L1681.5,1074 M1699.5,1069.6 L1699.5,1074 M1717.5,1069.6 L1717.5,1074 M1735.5,1069.6 L1735.5,1074 M1753.5,1069.6 L1753.5,1074 M1771.5,1069.6 L1771.5,1074 M1789.5,1069.6 L1789.5,1074 M1807.5,1069.6 L1807.5,1074 M1825.5,1069.6 L1825.5,1074 M1843.5,1069.6 L1843.5,1074 M1861.5,1069.6 L1861.5,1074 M1879.5,1069.6 L1879.5,1074" stroke="#bebebe" stroke-width="1"/>
<use href="#iB" x="109" y="1054"/>
<use href="#iS" x="127" y="1054"/>
<use href="#iE" x="145" y="1054"/>
<use href="#iE" x="163" y="1054"/>
<use href="#iB" x="181" y="1054"/>
<use href="#iS" x="199" y="1054"/>
<use href="#iE" x="217" y="1054"/>
<use href="#iS" x="235" y="1054"/>
<use href="#iE" x="253" y="1054"/>
<use href="#iP" x="271" y="1054"/>
<use href="#iM" x="289" y="1054"/>
<use href="#iS" x="307" y="1054"/>
<use href="#iE" x="325" y="1054"/>
<use href="#iV" x="343" y="1054"/>
<use href="#iS" x="361" y="1054"/>
<use href="#iE" x="379" y="1054"/>
<use href="#iP" x="397" y="1054"/>
<use href="#iM" x="415" y="1054"/>
<use href="#iC" x="433" y="1054"/>
<use href="#iE" x="451" y="1054"/>
<use href="#iJ" x="469" y="1054"/>
<use href="#iO" x="487" y="1054"/>
<use href="#iS" x="505" y="1054"/>
<use href="#iE" x="523" y="1054"/>
<use href="#iE" x="541" y="1054"/>
<use href="#iE" x="559" y="1054"/>
<use href="#iE" x="577" y="1054"/>
<use href="#iS" x="595" y="1054"/>
<use href="#iE" x="613" y="1054"/>
<use href="#iE" x="631" y="1054"/>
<use href="#iE" x="649" y="1054"/>
<use href="#iC" x="667" y="1054"/>
<use href="#iM" x="685" y="1054"/>
<use href="#iM" x="703" y="1054"/>
<use href="#iM" x="721" y="1054"/>
<use href="#iS" x="739" y="1054"/>
<use href="#iE" x="757" y="1054"/>
<use href="#iS" x="775" y="1054"/>
<use href="#iS" x="793" y="1054"/>
<use href="#iE" x="811" y="1054"/>
<use href="#iE" x="829" y="1054"/>
<use href="#iX" x="847" y="1054"/>
<use href="#iE" x="865" y="1054"/>
<use href="#iS" x="883" y="1054"/>
<use href="#iE" x="901" y="1054"/>
<use href="#iS" x="919" y="1054"/>
<use href="#iE" x="937" y="1054"/>
<use href="#iS" x="955" y="1054"/>
<use href="#iE" x="973" y="1054"/>
<use href="#iB" x="991" y="1054"/>
<use href="#iS" x="1009" y="1054"/>
<use href="#iI" x="1027" y="1054"/>
<use href="#iS" x="1045" y="1054"/>
<use href="#iH" x="1063" y="1054"/>
<use href="#iE" x="1081" y="1054"/>
<use href="#iT" x="1099" y="1054"/>
<use href="#iF" x="1117" y="1054"/>
<use href="#iF" x="1135" y="1054"/>
<use href="#iV" x="1153" y="1054"/>
<use href="#iV" x="1171" y="1054"/>
<use href="#iV" x="1189" y="1054"/>
<use href="#iW" x="1207" y="1054"/>
<use href="#iT" x="1225" y="1054"/>
<use href="#iB" x="1243" y="1054"/>
<use href="#iS" x="1261" y="1054"/>
<use href="#iE" x="1279" y="1054"/>
<use href="#iS" x="1297" y="1054"/>
<use href="#iE" x="1315" y="1054"/>
<use href="#iK" x="1333" y="1054"/>
<use href="#iK" x="1351" y="1054"/>
<use href="#iS" x="1369" y="1054"/>
<rect x="1384" y="1051.2" width="18.8" height="18.800" rx="1.2" fill="#f5a623"/>
<rect x="1386.8" y="1055.8" width="9.400" height="11.4" rx="1.2" fill="#d9b57c" stroke="#8a6a3a" stroke-width="0.6"/>
<use href="#iE" x="1387.4" y="1054"/>
<use href="#iE" x="1405" y="1054"/>
<use href="#iK" x="1423" y="1054"/>
<use href="#iS" x="1441" y="1054"/>
<use href="#iE" x="1459" y="1054"/>
<use href="#iS" x="1477" y="1054"/>
<use href="#iE" x="1495" y="1054"/>
<use href="#iK" x="1513" y="1054"/>
<use href="#iM" x="1531" y="1054"/>
<use href="#iS" x="1549" y="1054"/>
<use href="#iE" x="1567" y="1054"/>
<use href="#iS" x="1585" y="1054"/>
<use href="#iE" x="1603" y="1054"/>
<use href="#iM" x="1621" y="1054"/>
<use href="#iS" x="1639" y="1054"/>
<use href="#iE" x="1657" y="1054"/>
<use href="#iV" x="1675" y="1054"/>
<use href="#iO" x="1693" y="1054"/>
<use href="#iF" x="1711" y="1054"/>
<use href="#iS" x="1729" y="1054"/>
<use href="#iE" x="1747" y="1054"/>
<use href="#iS" x="1765" y="1054"/>
<use href="#iE" x="1783" y="1054"/>
<use href="#iS" x="1801" y="1054"/>
<use href="#iE" x="1819" y="1054"/>
<use href="#iE" x="1837" y="1054"/>
<use href="#iE" x="1855" y="1054"/>
<use href="#iC" x="1873" y="1054"/>
<path d="M1909.68,1063.03 L1909.80,1064.20 L1908.12,1065.06 L1907.87,1065.88 L1908.79,1067.53 L1908.04,1068.44 L1906.24,1067.86 L1905.48,1068.27 L1904.97,1070.08 L1903.80,1070.20 L1902.94,1068.52 L1902.12,1068.27 L1900.47,1069.19 L1899.56,1068.44 L1900.14,1066.64 L1899.73,1065.88 L1897.92,1065.37 L1897.80,1064.20 L1899.48,1063.34 L1899.73,1062.52 L1898.81,1060.87 L1899.56,1059.96 L1901.36,1060.54 L1902.12,1060.13 L1902.63,1058.32 L1903.80,1058.20 L1904.66,1059.88 L1905.48,1060.13 L1907.13,1059.21 L1908.04,1059.96 L1907.46,1061.76 L1907.87,1062.52 Z" fill="#b4b4b4"/><circle cx="1903.8" cy="1064.2" r="2" fill="#ededed"/>
</svg>
</body></html>
